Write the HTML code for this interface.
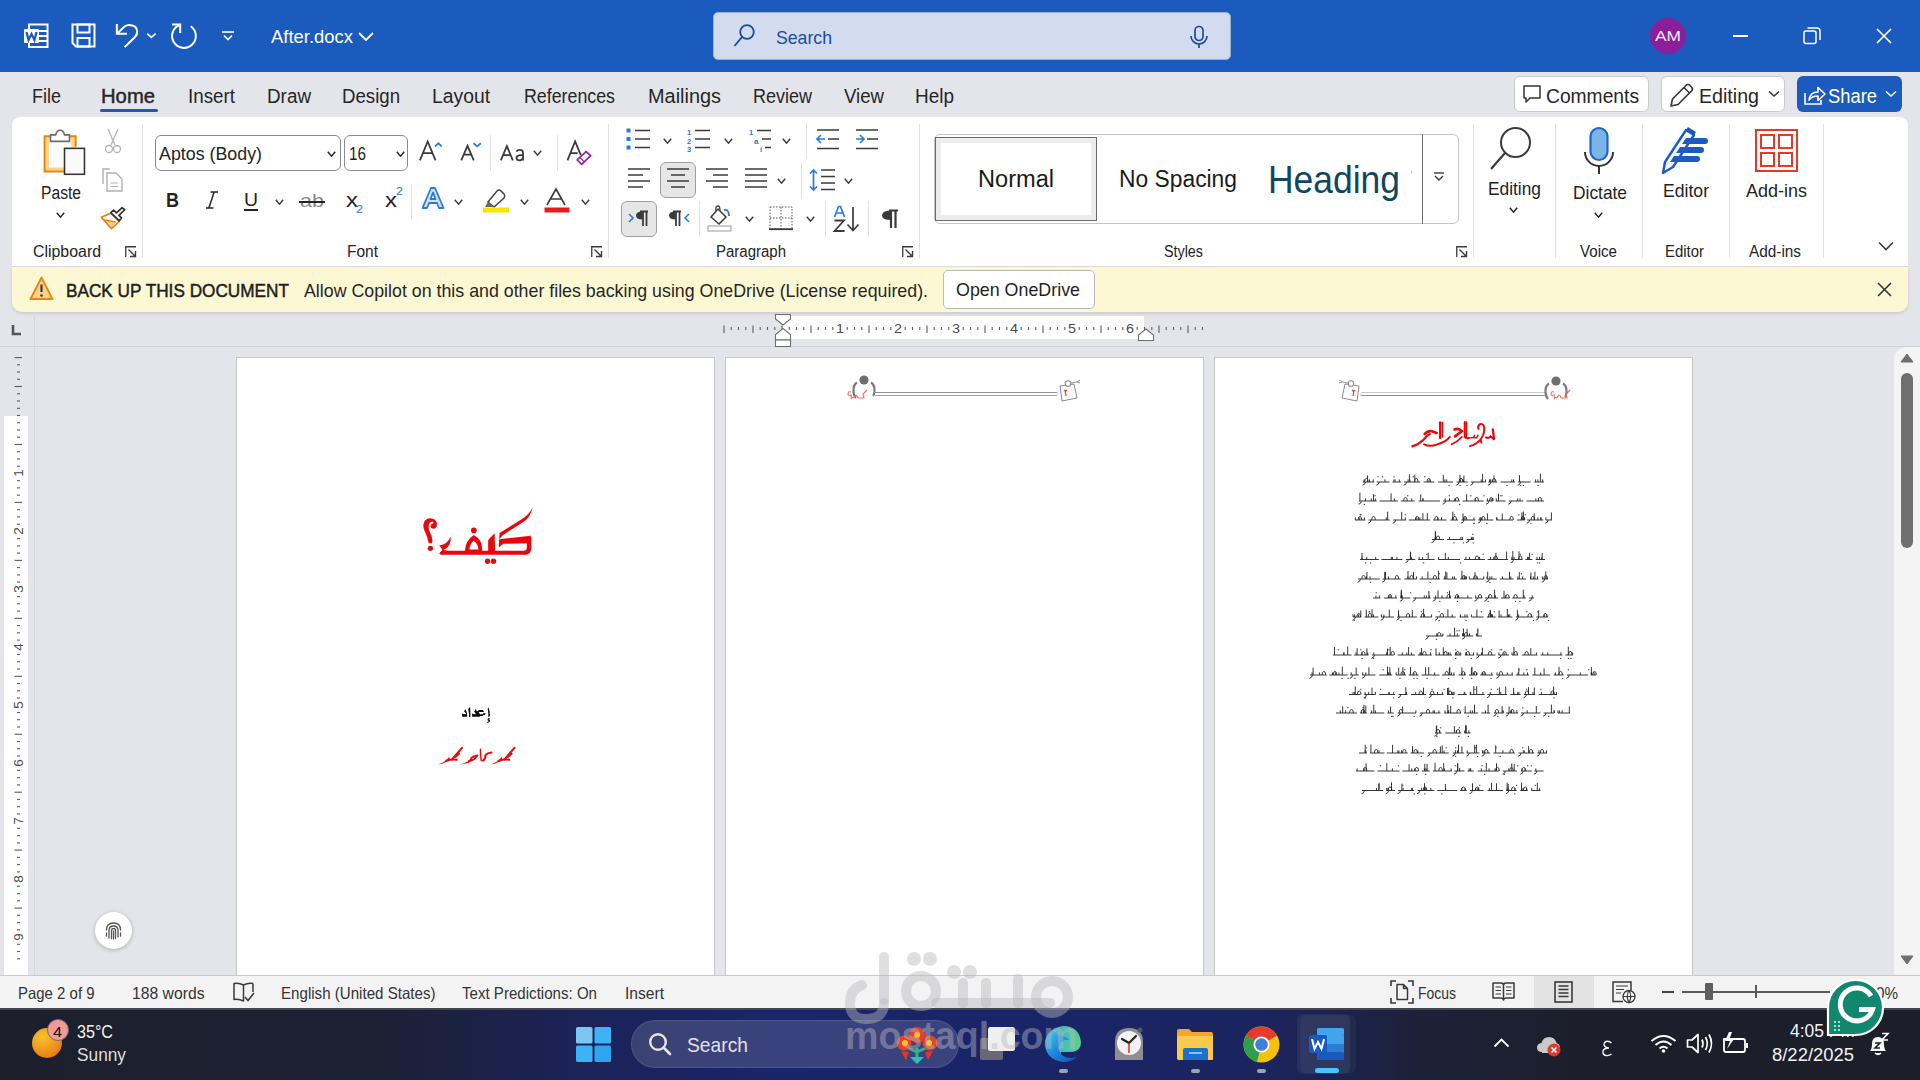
<!DOCTYPE html>
<html><head><meta charset="utf-8"><style>
*{margin:0;padding:0;box-sizing:border-box}
html,body{width:1920px;height:1080px;overflow:hidden}
body{position:relative;background:#e4e5ea;font-family:"Liberation Sans",sans-serif}
.a{position:absolute}
.t{white-space:nowrap;transform-origin:0 0}
svg{overflow:visible}
</style></head><body>
<div class="a" style="left:0px;top:0px;width:1920px;height:72px;background:#1b5bbe"></div>
<div class="a" style="left:12px;top:117px;width:1896px;height:150px;background:#fff;border-radius:8px 8px 0 0;border-bottom:1px solid #dcdcdc"></div>
<div class="a" style="left:12px;top:267px;width:1896px;height:45px;background:#fcf8d4;border-radius:0 0 10px 10px;box-shadow:0 2px 3px rgba(0,0,0,0.10)"></div>
<div class="a" style="left:0px;top:346px;width:1920px;height:1px;background:#d2d3d7"></div>
<div class="a" style="left:34px;top:312px;width:1px;height:663px;background:#d6d7db"></div>
<div class="a" style="left:0px;top:975px;width:1920px;height:1px;background:#c9cacd"></div>
<div class="a" style="left:0px;top:976px;width:1920px;height:32px;background:#f3f3f3"></div>
<div class="a" style="left:0;top:1008px;width:1920px;height:72px;background:linear-gradient(90deg,#1b1f2c 0%,#1c2236 22%,#1d2a60 45%,#1c2a66 55%,#1a2350 72%,#171c2c 100%)"></div>
<div class="a" style="left:0px;top:1008px;width:1920px;height:2px;background:#3a3f4e"></div>
<svg class="a" style="left:24px;top:23px;" width="26" height="26" viewBox="0 0 26 26"><rect x="5" y="1.5" width="18.5" height="22.5" fill="none" stroke="#fff" stroke-width="2"/><line x1="14" y1="8" x2="23" y2="8" stroke="#fff" stroke-width="2"/><line x1="14" y1="13" x2="23" y2="13" stroke="#fff" stroke-width="2"/><line x1="14" y1="18" x2="23" y2="18" stroke="#fff" stroke-width="2"/><rect x="0" y="6" width="15" height="14" fill="#fff" rx="1"/><path d="M2.5 9 L4.5 17 L7.5 11 L10.5 17 L12.5 9" fill="none" stroke="#1b5bbe" stroke-width="2.2"/></svg>
<svg class="a" style="left:71px;top:23px;" width="26" height="26" viewBox="0 0 26 26"><path d="M1.5 1.5 H23.5 V23.5 H5 L1.5 20 Z" fill="none" stroke="#fff" stroke-width="2"/><rect x="6.5" y="1.5" width="12" height="8" fill="none" stroke="#fff" stroke-width="2"/><rect x="6.5" y="15" width="12" height="8.5" fill="none" stroke="#fff" stroke-width="2"/></svg>
<svg class="a" style="left:110px;top:16px;" width="50" height="40" viewBox="0 0 50 40"><path d="M6.85 8 V17.8 H17" fill="none" stroke="#fff" stroke-width="2"/><path d="M7.5 17.3 L14.5 10.5 Q17 8.8 19.6 8.9 Q27 9.3 27.2 15.5 Q27.3 19 24.5 21.5 L14.6 31.1" fill="none" stroke="#fff" stroke-width="2"/><path d="M37.2 17.6 L41.4 21.4 L45.6 17.6" fill="none" stroke="#fff" stroke-width="1.6"/></svg>
<svg class="a" style="left:170px;top:22px;" width="28" height="28" viewBox="0 0 28 28"><path d="M2 2.5 H10.2 V10.9" fill="none" stroke="#fff" stroke-width="2"/><path d="M20.7 4.3 A11.85 11.85 0 1 1 10.2 2.8" fill="none" stroke="#fff" stroke-width="2"/></svg>
<svg class="a" style="left:221px;top:30px;" width="14" height="12" viewBox="0 0 14 12"><line x1="1" y1="2" x2="13" y2="2" stroke="#fff" stroke-width="1.6"/><path d="M3 5.5 L7 9.5 L11 5.5" fill="none" stroke="#fff" stroke-width="1.6"/></svg>
<div class="a t" style="left:271px;top:26.91px;font-size:19px;line-height:19px;color:#ffffff;transform:scaleX(0.9706);">After.docx</div>
<svg class="a" style="left:358px;top:31px;" width="16" height="11" viewBox="0 0 16 11"><path d="M1 2 L8 9 L15 2" fill="none" stroke="#fff" stroke-width="1.8"/></svg>
<div class="a" style="left:713px;top:12px;width:518px;height:48px;background:#d2dcee;border-radius:5px;border:1px solid #9fb0cf"></div>
<svg class="a" style="left:733px;top:24px;" width="22" height="24" viewBox="0 0 22 24"><circle cx="14" cy="8" r="6.8" fill="none" stroke="#1b4c9c" stroke-width="1.8"/><line x1="9" y1="13" x2="1.5" y2="22" stroke="#1b4c9c" stroke-width="1.9"/></svg>
<div class="a t" style="left:776px;top:27.91px;font-size:19px;line-height:19px;color:#1b4c9c;transform:scaleX(0.9303);">Search</div>
<svg class="a" style="left:1189px;top:25px;" width="20" height="24" viewBox="0 0 20 24"><rect x="6" y="1.5" width="8" height="14" rx="4" fill="none" stroke="#1b4c9c" stroke-width="1.7"/><path d="M2 11 A8 8 0 0 0 18 11" fill="none" stroke="#1b4c9c" stroke-width="1.7"/><line x1="10" y1="19" x2="10" y2="23" stroke="#1b4c9c" stroke-width="1.7"/></svg>
<div class="a" style="left:1650px;top:18px;width:36px;height:36px;border-radius:50%;background:#8b1f9b"></div>
<div class="a t" style="left:1655px;top:28.30px;font-size:15px;line-height:15px;color:#f6e9f7;transform:scaleX(1.1556);">AM</div>
<div class="a" style="left:1733px;top:35px;width:15px;height:1.5px;background:#fff"></div>
<svg class="a" style="left:1803px;top:27px;" width="18" height="18" viewBox="0 0 18 18"><rect x="1" y="4" width="12" height="12.5" rx="2" fill="none" stroke="#fff" stroke-width="1.5"/><path d="M4.5 1 H14 Q17 1 17 4 V13" fill="none" stroke="#fff" stroke-width="1.5"/></svg>
<svg class="a" style="left:1876px;top:28px;" width="16" height="16" viewBox="0 0 16 16"><path d="M1 1 L15 15 M15 1 L1 15" stroke="#fff" stroke-width="1.6"/></svg>
<div class="a t" style="left:32px;top:86.07px;font-size:20px;line-height:20px;color:#262626;transform:scaleX(0.8999);">File</div>
<div class="a t" style="left:101px;top:86.07px;font-size:20px;line-height:20px;color:#262626;transform:scaleX(1.0122);-webkit-text-stroke:0.45px #262626">Home</div>
<div class="a t" style="left:188px;top:86.07px;font-size:20px;line-height:20px;color:#262626;transform:scaleX(0.9397);">Insert</div>
<div class="a t" style="left:267px;top:86.07px;font-size:20px;line-height:20px;color:#262626;transform:scaleX(0.9428);">Draw</div>
<div class="a t" style="left:342px;top:86.07px;font-size:20px;line-height:20px;color:#262626;transform:scaleX(0.9317);">Design</div>
<div class="a t" style="left:432px;top:86.07px;font-size:20px;line-height:20px;color:#262626;transform:scaleX(0.9660);">Layout</div>
<div class="a t" style="left:524px;top:86.07px;font-size:20px;line-height:20px;color:#262626;transform:scaleX(0.8898);">References</div>
<div class="a t" style="left:648px;top:86.07px;font-size:20px;line-height:20px;color:#262626;transform:scaleX(0.9951);">Mailings</div>
<div class="a t" style="left:753px;top:86.07px;font-size:20px;line-height:20px;color:#262626;transform:scaleX(0.8997);">Review</div>
<div class="a t" style="left:844px;top:86.07px;font-size:20px;line-height:20px;color:#262626;transform:scaleX(0.9305);">View</div>
<div class="a t" style="left:915px;top:86.07px;font-size:20px;line-height:20px;color:#262626;transform:scaleX(0.9482);">Help</div>
<div class="a" style="left:100px;top:109px;width:58px;height:3px;background:#1b5bbe;border-radius:2px"></div>
<div class="a" style="left:1514px;top:76px;width:135px;height:36px;background:#fff;border:1px solid #c9c9c9;border-radius:6px"></div>
<svg class="a" style="left:1522px;top:84px;" width="22" height="22" viewBox="0 0 22 22"><path d="M2 2 H18 V14 H8 L4 18 V14 H2 Z" fill="none" stroke="#333" stroke-width="1.5" stroke-linejoin="round"/></svg>
<div class="a t" style="left:1546px;top:86.07px;font-size:20px;line-height:20px;color:#262626;transform:scaleX(0.9619);">Comments</div>
<div class="a" style="left:1661px;top:76px;width:124px;height:36px;background:#fff;border:1px solid #c9c9c9;border-radius:6px"></div>
<svg class="a" style="left:1667px;top:82px;" width="28" height="28" viewBox="0 0 28 28"><path d="M4 24 L5.5 17 L19 3.5 Q21 1.5 23 3.5 L24.5 5 Q26.5 7 24.5 9 L11 22.5 Z" fill="none" stroke="#333" stroke-width="1.6" stroke-linejoin="round"/><line x1="17" y1="5.5" x2="22.5" y2="11" stroke="#333" stroke-width="1.5"/></svg>
<div class="a t" style="left:1699px;top:86.07px;font-size:20px;line-height:20px;color:#262626;transform:scaleX(0.9812);">Editing</div>
<svg class="a" style="left:1768px;top:90px;" width="12" height="8" viewBox="0 0 12 8"><path d="M1 1.5 L6 6 L11 1.5" fill="none" stroke="#333" stroke-width="1.5"/></svg>
<div class="a" style="left:1797px;top:76px;width:105px;height:36px;background:#1b5bbe;border-radius:6px"></div>
<svg class="a" style="left:1803px;top:84px;" width="24" height="22" viewBox="0 0 24 22"><path d="M2 9 V20 H18 V16" fill="none" stroke="#fff" stroke-width="1.6"/><path d="M6 16 Q7 8 15 8 V3.5 L22 10 L15 16.5 V12 Q9 12 6 16 Z" fill="none" stroke="#fff" stroke-width="1.6" stroke-linejoin="round"/></svg>
<div class="a t" style="left:1828px;top:86.07px;font-size:20px;line-height:20px;color:#ffffff;transform:scaleX(0.9182);">Share</div>
<svg class="a" style="left:1885px;top:90px;" width="12" height="8" viewBox="0 0 12 8"><path d="M1 1.5 L6 6 L11 1.5" fill="none" stroke="#fff" stroke-width="1.5"/></svg>
<div class="a" style="left:142px;top:124px;width:1px;height:134px;background:#e0e0e0"></div>
<div class="a" style="left:608px;top:124px;width:1px;height:134px;background:#e0e0e0"></div>
<div class="a" style="left:919px;top:124px;width:1px;height:134px;background:#e0e0e0"></div>
<div class="a" style="left:1473px;top:124px;width:1px;height:134px;background:#e0e0e0"></div>
<div class="a" style="left:1555px;top:124px;width:1px;height:134px;background:#e0e0e0"></div>
<div class="a" style="left:1642px;top:124px;width:1px;height:134px;background:#e0e0e0"></div>
<div class="a" style="left:1729px;top:124px;width:1px;height:134px;background:#e0e0e0"></div>
<div class="a" style="left:1823px;top:124px;width:1px;height:134px;background:#e0e0e0"></div>
<div class="a t" style="left:33px;top:243.95px;font-size:16px;line-height:16px;color:#242424;transform:scaleX(0.9930);">Clipboard</div>
<svg class="a" style="left:125px;top:246px;" width="12" height="12" viewBox="0 0 12 12"><path d="M0.75 11 V0.75 H11" fill="none" stroke="#3b3b3b" stroke-width="1.3"/><path d="M3.5 3.5 L10.5 10.5 M5 10.5 H10.5 V5" fill="none" stroke="#3b3b3b" stroke-width="1.4"/></svg>
<div class="a t" style="left:347px;top:243.95px;font-size:16px;line-height:16px;color:#242424;transform:scaleX(0.9684);">Font</div>
<svg class="a" style="left:591px;top:246px;" width="12" height="12" viewBox="0 0 12 12"><path d="M0.75 11 V0.75 H11" fill="none" stroke="#3b3b3b" stroke-width="1.3"/><path d="M3.5 3.5 L10.5 10.5 M5 10.5 H10.5 V5" fill="none" stroke="#3b3b3b" stroke-width="1.4"/></svg>
<div class="a t" style="left:716px;top:243.95px;font-size:16px;line-height:16px;color:#242424;transform:scaleX(0.9369);">Paragraph</div>
<svg class="a" style="left:902px;top:246px;" width="12" height="12" viewBox="0 0 12 12"><path d="M0.75 11 V0.75 H11" fill="none" stroke="#3b3b3b" stroke-width="1.3"/><path d="M3.5 3.5 L10.5 10.5 M5 10.5 H10.5 V5" fill="none" stroke="#3b3b3b" stroke-width="1.4"/></svg>
<div class="a t" style="left:1164px;top:243.95px;font-size:16px;line-height:16px;color:#242424;transform:scaleX(0.8951);">Styles</div>
<svg class="a" style="left:1456px;top:246px;" width="12" height="12" viewBox="0 0 12 12"><path d="M0.75 11 V0.75 H11" fill="none" stroke="#3b3b3b" stroke-width="1.3"/><path d="M3.5 3.5 L10.5 10.5 M5 10.5 H10.5 V5" fill="none" stroke="#3b3b3b" stroke-width="1.4"/></svg>
<div class="a t" style="left:1580px;top:244.45px;font-size:16px;line-height:16px;color:#242424;transform:scaleX(0.9453);">Voice</div>
<div class="a t" style="left:1665px;top:244.45px;font-size:16px;line-height:16px;color:#242424;transform:scaleX(0.9331);">Editor</div>
<div class="a t" style="left:1749px;top:244.45px;font-size:16px;line-height:16px;color:#242424;transform:scaleX(0.9586);">Add-ins</div>
<svg class="a" style="left:1878px;top:241px;" width="16" height="11" viewBox="0 0 16 11"><path d="M1 1.5 L8 8.5 L15 1.5" fill="none" stroke="#3b3b3b" stroke-width="1.6"/></svg>
<svg class="a" style="left:36px;top:124px;" width="56" height="56" viewBox="0 0 56 56"><g transform="scale(0.05185)"><rect x="165" y="235" width="600" height="680" fill="#fbd58a"/><rect x="250" y="320" width="430" height="520" fill="#fbfbfb"/><path d="M280 235 H165 V915 H540 M645 235 H765 V440" fill="none" stroke="#e8850f" stroke-width="38"/><path d="M280 210 H380 Q400 120 465 120 Q530 120 550 210 H645 V335 H280 Z" fill="#fff" stroke="#6b6b6b" stroke-width="30"/><rect x="550" y="470" width="385" height="500" fill="#fafafa" stroke="#333" stroke-width="30"/></g></svg>
<div class="a t" style="left:41px;top:183.76px;font-size:18px;line-height:18px;color:#242424;transform:scaleX(0.8691);">Paste</div>
<svg class="a" style="left:56px;top:212px;" width="9" height="6" viewBox="0 0 9 6"><path d="M0.8 0.8 L4.5 5.2 L8.2 0.8" fill="none" stroke="#242424" stroke-width="1.5"/></svg>
<svg class="a" style="left:104px;top:128px;" width="18" height="26" viewBox="0 0 18 26"><path d="M4 1 L11 17 M14 1 L7 17" stroke="#b5b5b5" stroke-width="1.3" fill="none"/><circle cx="5" cy="21" r="3.5" fill="none" stroke="#b5b5b5" stroke-width="1.3"/><circle cx="13" cy="21" r="3.5" fill="none" stroke="#b5b5b5" stroke-width="1.3"/></svg>
<svg class="a" style="left:100px;top:167px;" width="26" height="26" viewBox="0 0 26 26"><path d="M3 17 V2 H10" fill="none" stroke="#b0b0b0" stroke-width="1.4"/><path d="M7 6 H16 L22 12 V24 H7 Z" fill="none" stroke="#b0b0b0" stroke-width="1.4"/><path d="M10.5 16 H18 M10.5 19.5 H18" stroke="#b0b0b0" stroke-width="1.2"/></svg>
<svg class="a" style="left:96px;top:200px;" width="34" height="34" viewBox="0 0 34 34"><g transform="scale(0.03148)"><path d="M330 640 L640 700 L490 880 Z" fill="#f9d28a"/><path d="M170 550 L460 420 L740 680 L490 910 Z" fill="none" stroke="#e87d10" stroke-width="52" stroke-linejoin="round"/><path d="M250 630 L620 700" stroke="#e87d10" stroke-width="45"/><path d="M470 400 L560 320 L650 410 L830 240 L910 310 L730 490 L810 570 L740 660 Z" fill="#fff" stroke="#333" stroke-width="55" stroke-linejoin="round"/></g></svg>
<div class="a" style="left:155px;top:135px;width:186px;height:36px;background:#fff;border:1px solid #8a8a8a;border-radius:6px"></div>
<div class="a t" style="left:159px;top:143.91px;font-size:19px;line-height:19px;color:#242424;transform:scaleX(0.9379);">Aptos (Body)</div>
<svg class="a" style="left:327px;top:151px;" width="9" height="6" viewBox="0 0 9 6"><path d="M0.8 0.8 L4.5 5.2 L8.2 0.8" fill="none" stroke="#242424" stroke-width="1.5"/></svg>
<div class="a" style="left:344px;top:135px;width:64px;height:36px;background:#fff;border:1px solid #8a8a8a;border-radius:6px"></div>
<div class="a t" style="left:349px;top:143.91px;font-size:19px;line-height:19px;color:#242424;transform:scaleX(0.8045);">16</div>
<svg class="a" style="left:396px;top:151px;" width="9" height="6" viewBox="0 0 9 6"><path d="M0.8 0.8 L4.5 5.2 L8.2 0.8" fill="none" stroke="#242424" stroke-width="1.5"/></svg>
<svg class="a" style="left:410px;top:125px;" width="200" height="110" viewBox="0 0 200 110"><g transform="scale(0.10417)" fill="none" stroke="#3b3b3b" stroke-width="17"><path d="M95 340 L170 158 L245 340 M125 270 H215"/><path d="M492 340 L552 200 L612 340 M515 285 H590"/><path d="M872 340 L930 202 L987 340 M893 290 H966"/><path d="M1085 340 V270 Q1085 238 1055 238 Q1030 238 1022 255 M1085 290 Q1030 285 1022 310 Q1022 340 1050 340 Q1075 340 1085 315"/><path d="M1512 340 L1585 158 L1640 290 M1540 270 H1610"/></g><g transform="scale(0.10417)"><path d="M240 205 L272 175 L304 205" fill="none" stroke="#2a7bd4" stroke-width="17"/><path d="M610 175 L645 205 L680 175" fill="none" stroke="#2a7bd4" stroke-width="17"/><path d="M1605 335 L1690 255 L1735 295 L1648 378 Z" fill="#fff" stroke="#8b2aa4" stroke-width="17" stroke-linejoin="round"/><path d="M1630 312 L1672 352" stroke="#8b2aa4" stroke-width="12"/></g></svg>
<div class="a" style="left:490px;top:135px;width:1px;height:36px;background:#e0e0e0"></div>
<svg class="a" style="left:533px;top:150px;" width="9" height="6" viewBox="0 0 9 6"><path d="M0.8 0.8 L4.5 5.2 L8.2 0.8" fill="none" stroke="#3b3b3b" stroke-width="1.5"/></svg>
<div class="a" style="left:557px;top:135px;width:1px;height:36px;background:#e0e0e0"></div>
<div class="a t" style="left:166px;top:190.07px;font-size:20px;line-height:20px;color:#242424;font-weight:700;transform:scaleX(0.9000);">B</div>
<svg class="a" style="left:204px;top:191px;" width="16" height="18" viewBox="0 0 16 18"><path d="M10 1.5 L5 16.5 M6.5 1 H14 M2 17 H9.5" fill="none" stroke="#242424" stroke-width="1.5"/></svg>
<div class="a t" style="left:244px;top:189.91px;font-size:19px;line-height:19px;color:#242424;transform:scaleX(1.0203);">U</div>
<div class="a" style="left:244px;top:209px;width:14px;height:1.5px;background:#242424"></div>
<svg class="a" style="left:275px;top:199px;" width="9" height="6" viewBox="0 0 9 6"><path d="M0.8 0.8 L4.5 5.2 L8.2 0.8" fill="none" stroke="#3b3b3b" stroke-width="1.5"/></svg>
<div class="a t" style="left:300px;top:190.91px;font-size:19px;line-height:19px;color:#8a8a8a;transform:scaleX(1.1357);">ab</div>
<div class="a" style="left:299px;top:201px;width:26px;height:1.5px;background:#242424"></div>
<div class="a t" style="left:346px;top:190.07px;font-size:20px;line-height:20px;color:#242424;transform:scaleX(1.2000);">x</div>
<div class="a t" style="left:356px;top:203.69px;font-size:11px;line-height:11px;color:#2a7bd4;transform:scaleX(1.1443);">2</div>
<div class="a t" style="left:385px;top:190.07px;font-size:20px;line-height:20px;color:#242424;transform:scaleX(1.2000);">x</div>
<div class="a t" style="left:396px;top:185.69px;font-size:11px;line-height:11px;color:#2a7bd4;transform:scaleX(1.1443);">2</div>
<div class="a" style="left:411px;top:184px;width:1px;height:35px;background:#e0e0e0"></div>
<svg class="a" style="left:421px;top:186px;" width="24" height="24" viewBox="0 0 24 24"><path d="M1.5 22 L10 2 H14 L22.5 22 H18 L16 17 H8 L6 22 Z M9.5 13 H14.5 L12 6.5 Z" fill="#cfe3fa" stroke="#2a7bd4" stroke-width="1.8" stroke-linejoin="round"/></svg>
<svg class="a" style="left:454px;top:199px;" width="9" height="6" viewBox="0 0 9 6"><path d="M0.8 0.8 L4.5 5.2 L8.2 0.8" fill="none" stroke="#3b3b3b" stroke-width="1.5"/></svg>
<svg class="a" style="left:482px;top:188px;" width="28" height="26" viewBox="0 0 28 26"><path d="M6 14 L15 3 Q17 1 19 3 L22 6 Q23.5 8 22 10 L12 19 Z" fill="#fff" stroke="#444" stroke-width="1.5"/><path d="M6 14 L3 19 L8 19 L12 19" fill="#666"/><rect x="1" y="19.5" width="26" height="5" fill="#f7e600"/></svg>
<svg class="a" style="left:520px;top:199px;" width="9" height="6" viewBox="0 0 9 6"><path d="M0.8 0.8 L4.5 5.2 L8.2 0.8" fill="none" stroke="#3b3b3b" stroke-width="1.5"/></svg>
<svg class="a" style="left:544px;top:188px;" width="26" height="26" viewBox="0 0 26 26"><path d="M3 17 L12 1 L21 17 M6.5 11 H17.5" fill="none" stroke="#3b3b3b" stroke-width="1.6"/><rect x="0.5" y="19.5" width="25" height="5" fill="#e81a1a"/></svg>
<svg class="a" style="left:581px;top:199px;" width="9" height="6" viewBox="0 0 9 6"><path d="M0.8 0.8 L4.5 5.2 L8.2 0.8" fill="none" stroke="#3b3b3b" stroke-width="1.5"/></svg>
<svg class="a" style="left:626px;top:128px;" width="26" height="24" viewBox="0 0 26 24"><rect x="0.5" y="0.5" width="4" height="4" fill="#2a7bd4"/><rect x="0.5" y="9" width="4" height="4" fill="#2a7bd4"/><rect x="0.5" y="17.5" width="4" height="4" fill="#2a7bd4"/><path d="M9 2.5 H24 M9 11 H24 M9 19.5 H24" stroke="#3b3b3b" stroke-width="1.7"/></svg>
<svg class="a" style="left:663px;top:138px;" width="9" height="6" viewBox="0 0 9 6"><path d="M0.8 0.8 L4.5 5.2 L8.2 0.8" fill="none" stroke="#3b3b3b" stroke-width="1.5"/></svg>
<svg class="a" style="left:687px;top:128px;" width="26" height="25" viewBox="0 0 26 25"><text x="0" y="6.5" font-size="7.5" font-family="Liberation Sans" font-weight="700" fill="#2a7bd4">1</text><text x="0" y="15.5" font-size="7.5" font-family="Liberation Sans" font-weight="700" fill="#2a7bd4">2</text><text x="0" y="24" font-size="7.5" font-family="Liberation Sans" font-weight="700" fill="#2a7bd4">3</text><path d="M8 2.5 H23 M8 11 H23 M8 19.5 H23" stroke="#3b3b3b" stroke-width="1.7"/></svg>
<svg class="a" style="left:724px;top:138px;" width="9" height="6" viewBox="0 0 9 6"><path d="M0.8 0.8 L4.5 5.2 L8.2 0.8" fill="none" stroke="#3b3b3b" stroke-width="1.5"/></svg>
<svg class="a" style="left:748px;top:128px;" width="26" height="25" viewBox="0 0 26 25"><text x="1" y="6.5" font-size="7.5" font-family="Liberation Sans" font-weight="700" fill="#2a7bd4">1</text><text x="6" y="15.5" font-size="8" font-family="Liberation Sans" font-weight="700" fill="#2a7bd4">a</text><text x="12" y="24" font-size="7.5" font-family="Liberation Sans" font-weight="700" fill="#2a7bd4">i</text><path d="M9 2.5 H23 M14 11 H23 M17 19.5 H23" stroke="#3b3b3b" stroke-width="1.7"/></svg>
<svg class="a" style="left:782px;top:138px;" width="9" height="6" viewBox="0 0 9 6"><path d="M0.8 0.8 L4.5 5.2 L8.2 0.8" fill="none" stroke="#3b3b3b" stroke-width="1.5"/></svg>
<div class="a" style="left:806px;top:123px;width:1px;height:36px;background:#e0e0e0"></div>
<svg class="a" style="left:816px;top:129px;" width="24" height="22" viewBox="0 0 24 22"><path d="M1 1 H23 M12 10 H23 M1 19.5 H23" stroke="#3b3b3b" stroke-width="1.7"/><path d="M1 10 H9 M5 6 L1 10 L5 14" fill="none" stroke="#2a7bd4" stroke-width="1.7"/></svg>
<svg class="a" style="left:855px;top:129px;" width="24" height="22" viewBox="0 0 24 22"><path d="M1 1 H23 M12 10 H23 M1 19.5 H23" stroke="#3b3b3b" stroke-width="1.7"/><path d="M1 10 H9 M5 6 L9 10 L5 14" fill="none" stroke="#2a7bd4" stroke-width="1.7"/></svg>
<svg class="a" style="left:627px;top:168px;" width="24" height="22" viewBox="0 0 24 22"><path d="M1 1 H23 M1 7 H16 M1 13 H23 M1 19 H16" stroke="#3b3b3b" stroke-width="1.7"/></svg>
<div class="a" style="left:660px;top:162px;width:36px;height:36px;background:#e6e6e6;border:1px solid #9e9e9e;border-radius:6px"></div>
<svg class="a" style="left:666px;top:168px;" width="24" height="22" viewBox="0 0 24 22"><path d="M1 1 H23 M5 7 H19 M1 13 H23 M5 19 H19" stroke="#3b3b3b" stroke-width="1.7"/></svg>
<svg class="a" style="left:705px;top:168px;" width="24" height="22" viewBox="0 0 24 22"><path d="M1 1 H23 M8 7 H23 M1 13 H23 M8 19 H23" stroke="#3b3b3b" stroke-width="1.7"/></svg>
<svg class="a" style="left:744px;top:168px;" width="24" height="22" viewBox="0 0 24 22"><path d="M1 1 H23 M1 7 H23 M1 13 H23 M1 19 H23" stroke="#3b3b3b" stroke-width="1.7"/></svg>
<svg class="a" style="left:777px;top:178px;" width="9" height="6" viewBox="0 0 9 6"><path d="M0.8 0.8 L4.5 5.2 L8.2 0.8" fill="none" stroke="#3b3b3b" stroke-width="1.5"/></svg>
<div class="a" style="left:801px;top:163px;width:1px;height:35px;background:#e0e0e0"></div>
<svg class="a" style="left:809px;top:168px;" width="28" height="24" viewBox="0 0 28 24"><path d="M4.5 2 V22 M1 5.5 L4.5 2 L8 5.5 M1 18.5 L4.5 22 L8 18.5" fill="none" stroke="#2a7bd4" stroke-width="1.7"/><path d="M12 2 H26 M12 8.5 H26 M12 15 H26 M12 21.5 H26" stroke="#3b3b3b" stroke-width="1.7"/></svg>
<svg class="a" style="left:844px;top:178px;" width="9" height="6" viewBox="0 0 9 6"><path d="M0.8 0.8 L4.5 5.2 L8.2 0.8" fill="none" stroke="#3b3b3b" stroke-width="1.5"/></svg>
<div class="a" style="left:621px;top:201px;width:36px;height:36px;background:#e6e6e6;border:1px solid #9e9e9e;border-radius:6px"></div>
<svg class="a" style="left:628px;top:210px;" width="22" height="17" viewBox="0 0 22 17"><path d="M1 4 L5 8 L1 12" fill="none" stroke="#2a7bd4" stroke-width="1.6"/><path d="M12 1.5 H20 M15 1.5 V16 M18.5 1.5 V16" stroke="#3b3b3b" stroke-width="1.8"/><path d="M14.5 1.5 Q8 1.5 8 5.5 Q8 9.5 14.5 9.5 Z" fill="#3b3b3b"/></svg>
<svg class="a" style="left:668px;top:210px;" width="22" height="17" viewBox="0 0 22 17"><path d="M21 4 L17 8 L21 12" fill="none" stroke="#2a7bd4" stroke-width="1.6"/><path d="M5 1.5 H13 M8 1.5 V16 M11.5 1.5 V16" stroke="#3b3b3b" stroke-width="1.8"/><path d="M7.5 1.5 Q1 1.5 1 5.5 Q1 9.5 7.5 9.5 Z" fill="#3b3b3b"/></svg>
<div class="a" style="left:699px;top:201px;width:1px;height:36px;background:#e0e0e0"></div>
<svg class="a" style="left:707px;top:205px;" width="28" height="27" viewBox="0 0 28 27"><path d="M4 12 L11 4 L19 12 L12 19 Z" fill="#fff" stroke="#3b3b3b" stroke-width="1.5"/><path d="M9 6 Q8 1 11 1 Q13 1 13 6" fill="none" stroke="#3b3b3b" stroke-width="1.3"/><path d="M17 5 Q22 4 22 11" fill="none" stroke="#2a7bd4" stroke-width="1.8"/><rect x="1" y="21" width="23" height="5" fill="#fff" stroke="#9a9a9a" stroke-width="1"/></svg>
<svg class="a" style="left:745px;top:216px;" width="9" height="6" viewBox="0 0 9 6"><path d="M0.8 0.8 L4.5 5.2 L8.2 0.8" fill="none" stroke="#3b3b3b" stroke-width="1.5"/></svg>
<svg class="a" style="left:769px;top:206px;" width="25" height="25" viewBox="0 0 25 25"><rect x="1" y="1" width="22" height="22" fill="none" stroke="#555" stroke-width="1" stroke-dasharray="1.5 1.5"/><path d="M12 1 V23 M1 12 H23" stroke="#555" stroke-width="1" stroke-dasharray="1.5 1.5"/><line x1="0" y1="23.2" x2="24" y2="23.2" stroke="#3b3b3b" stroke-width="1.8"/></svg>
<svg class="a" style="left:806px;top:216px;" width="9" height="6" viewBox="0 0 9 6"><path d="M0.8 0.8 L4.5 5.2 L8.2 0.8" fill="none" stroke="#3b3b3b" stroke-width="1.5"/></svg>
<div class="a" style="left:825px;top:201px;width:1px;height:36px;background:#e0e0e0"></div>
<svg class="a" style="left:833px;top:205px;" width="28" height="28" viewBox="0 0 28 28"><path d="M1.5 12 L5.5 1.5 H7.5 L11.5 12 M3.3 8 H9.7" fill="none" stroke="#2a7bd4" stroke-width="1.7"/><path d="M1.5 15.5 H11 L1.5 26 H11.5" fill="none" stroke="#3b3b3b" stroke-width="1.8"/><path d="M20 2 V25 M14.5 19.5 L20 25.5 L25.5 19.5" fill="none" stroke="#3b3b3b" stroke-width="1.7"/></svg>
<div class="a" style="left:868px;top:201px;width:1px;height:36px;background:#e0e0e0"></div>
<svg class="a" style="left:880px;top:209px;" width="20" height="20" viewBox="0 0 20 20"><path d="M9 1.5 H18 M11 1.5 V19 M15.5 1.5 V19" stroke="#3b3b3b" stroke-width="2.2"/><path d="M11.5 1.5 Q2 1.5 2 6.5 Q2 11 11.5 11 Z" fill="#3b3b3b"/></svg>
<div class="a" style="left:934px;top:134px;width:525px;height:90px;background:#fff;border:1px solid #c4c4c4;border-radius:6px"></div>
<div class="a" style="left:935px;top:137px;width:162px;height:84px;background:#fff;border:1px solid #6a6a6a;box-shadow:inset 0 0 0 5px #ececec"></div>
<div class="a t" style="left:978px;top:167.53px;font-size:23px;line-height:23px;color:#1a1a1a;transform:scaleX(1.0254);">Normal</div>
<div class="a t" style="left:1119px;top:167.53px;font-size:23px;line-height:23px;color:#1a1a1a;transform:scaleX(0.9924);">No Spacing</div>
<div class="a t" style="left:1268px;top:160.83px;font-size:38px;line-height:38px;color:#0f4761;transform:scaleX(0.9326);">Heading</div>
<div class="a" style="left:1411px;top:171px;width:1px;height:3px;background:#b7c6cf"></div>
<div class="a" style="left:1422px;top:134px;width:37px;height:90px;border-left:1px solid #6a6a6a;border-radius:0 6px 6px 0"></div>
<svg class="a" style="left:1433px;top:172px;" width="12" height="10" viewBox="0 0 12 10"><path d="M1 1 H11" stroke="#3b3b3b" stroke-width="1.4"/><path d="M2 4 L6 8 L10 4" fill="none" stroke="#3b3b3b" stroke-width="1.4"/></svg>
<svg class="a" style="left:1489px;top:126px;" width="48" height="46" viewBox="0 0 48 46"><circle cx="26.5" cy="16.5" r="14.5" fill="#fff" stroke="#3b3b3b" stroke-width="2"/><line x1="16" y1="27" x2="2" y2="43" stroke="#3b3b3b" stroke-width="2.2"/></svg>
<div class="a t" style="left:1488px;top:178.91px;font-size:19px;line-height:19px;color:#242424;transform:scaleX(0.9123);">Editing</div>
<svg class="a" style="left:1509px;top:207px;" width="9" height="6" viewBox="0 0 9 6"><path d="M0.8 0.8 L4.5 5.2 L8.2 0.8" fill="none" stroke="#242424" stroke-width="1.5"/></svg>
<svg class="a" style="left:1583px;top:126px;" width="32" height="50" viewBox="0 0 32 50"><rect x="7.5" y="2" width="17" height="32" rx="8.5" fill="#7bb4ea" stroke="#1e66c4" stroke-width="2.2"/><path d="M2 26 A14 14 0 0 0 30 26" fill="none" stroke="#333" stroke-width="2"/><line x1="16" y1="40" x2="16" y2="48" stroke="#333" stroke-width="2"/></svg>
<div class="a t" style="left:1573px;top:182.91px;font-size:19px;line-height:19px;color:#242424;transform:scaleX(0.9132);">Dictate</div>
<svg class="a" style="left:1594px;top:212px;" width="9" height="6" viewBox="0 0 9 6"><path d="M0.8 0.8 L4.5 5.2 L8.2 0.8" fill="none" stroke="#242424" stroke-width="1.5"/></svg>
<svg class="a" style="left:1661px;top:126px;" width="50" height="50" viewBox="0 0 50 50"><path d="M2 47 L4 36 L25 4 L33 9 L12 41 Z" fill="#f4f4f4" stroke="#1b5bbe" stroke-width="2.4" stroke-linejoin="round"/><path d="M25 4 L33 9 L35 6 L27 1 Z" fill="#1b5bbe"/><path d="M25 12 H44 Q47 12 47 15 Q47 18 44 18 H21 Z" fill="#1b5bbe"/><path d="M19 21 H40 Q43 21 43 24 Q43 27 40 27 H15 Z" fill="#1b5bbe"/><path d="M13 30 H36 Q39 30 39 33 Q39 36 36 36 H9 Z" fill="#1b5bbe"/></svg>
<div class="a t" style="left:1663px;top:180.91px;font-size:19px;line-height:19px;color:#242424;transform:scaleX(0.9268);">Editor</div>
<svg class="a" style="left:1755px;top:129px;" width="43" height="43" viewBox="0 0 43 43"><rect x="1" y="1" width="41" height="41" fill="none" stroke="#e03a2b" stroke-width="2"/><rect x="6" y="6" width="13" height="13" fill="none" stroke="#e03a2b" stroke-width="2"/><rect x="24" y="6" width="13" height="13" fill="none" stroke="#e03a2b" stroke-width="2"/><rect x="6" y="24" width="13" height="13" fill="none" stroke="#e03a2b" stroke-width="2"/><rect x="24" y="24" width="13" height="13" fill="none" stroke="#e03a2b" stroke-width="2"/></svg>
<div class="a t" style="left:1746px;top:180.91px;font-size:19px;line-height:19px;color:#242424;transform:scaleX(0.9469);">Add-ins</div>
<svg class="a" style="left:29px;top:276px;" width="25" height="25" viewBox="0 0 25 25"><path d="M12.5 1.5 L23.5 23 H1.5 Z" fill="#f9d28f" stroke="#e8860f" stroke-width="1.8" stroke-linejoin="round"/><path d="M12.5 8.5 V16" stroke="#3a3a3a" stroke-width="2.2"/><circle cx="12.5" cy="19.5" r="1.3" fill="#3a3a3a"/></svg>
<div class="a t" style="left:66px;top:281.41px;font-size:19px;line-height:19px;color:#1f1f1f;transform:scaleX(0.9053);-webkit-text-stroke:0.5px #1f1f1f">BACK UP THIS DOCUMENT</div>
<div class="a t" style="left:304px;top:281.41px;font-size:19px;line-height:19px;color:#262626;transform:scaleX(0.9364);">Allow Copilot on this and other files backing using OneDrive (License required).</div>
<div class="a" style="left:943px;top:270px;width:152px;height:39px;background:#fff;border:1px solid #b9b9b9;border-radius:5px"></div>
<div class="a t" style="left:956px;top:280.41px;font-size:19px;line-height:19px;color:#1f1f1f;transform:scaleX(0.9394);">Open OneDrive</div>
<svg class="a" style="left:1877px;top:282px;" width="15" height="15" viewBox="0 0 15 15"><path d="M1 1 L14 14 M14 1 L1 14" stroke="#333" stroke-width="1.6"/></svg>
<div class="a" style="left:783px;top:316px;width:361px;height:23px;background:#fff"></div>
<svg class="a" style="left:723px;top:316px;" width="482" height="23" viewBox="0 0 482 23"><line x1="1.0" y1="9.5" x2="1.0" y2="17" stroke="#5c5c5c" stroke-width="1.1"/><line x1="8.2" y1="11" x2="8.2" y2="14" stroke="#5c5c5c" stroke-width="1.1"/><line x1="15.5" y1="11" x2="15.5" y2="14" stroke="#5c5c5c" stroke-width="1.1"/><line x1="22.8" y1="11" x2="22.8" y2="14" stroke="#5c5c5c" stroke-width="1.1"/><line x1="30.0" y1="9.5" x2="30.0" y2="17" stroke="#5c5c5c" stroke-width="1.1"/><line x1="37.2" y1="11" x2="37.2" y2="14" stroke="#5c5c5c" stroke-width="1.1"/><line x1="44.5" y1="11" x2="44.5" y2="14" stroke="#5c5c5c" stroke-width="1.1"/><line x1="51.8" y1="11" x2="51.8" y2="14" stroke="#5c5c5c" stroke-width="1.1"/><line x1="59.0" y1="9.5" x2="59.0" y2="17" stroke="#5c5c5c" stroke-width="1.1"/><line x1="66.2" y1="11" x2="66.2" y2="14" stroke="#5c5c5c" stroke-width="1.1"/><line x1="73.5" y1="11" x2="73.5" y2="14" stroke="#5c5c5c" stroke-width="1.1"/><line x1="80.8" y1="11" x2="80.8" y2="14" stroke="#5c5c5c" stroke-width="1.1"/><line x1="88.0" y1="9.5" x2="88.0" y2="17" stroke="#5c5c5c" stroke-width="1.1"/><line x1="95.2" y1="11" x2="95.2" y2="14" stroke="#5c5c5c" stroke-width="1.1"/><line x1="102.5" y1="11" x2="102.5" y2="14" stroke="#5c5c5c" stroke-width="1.1"/><line x1="109.8" y1="11" x2="109.8" y2="14" stroke="#5c5c5c" stroke-width="1.1"/><line x1="124.2" y1="11" x2="124.2" y2="14" stroke="#5c5c5c" stroke-width="1.1"/><line x1="131.5" y1="11" x2="131.5" y2="14" stroke="#5c5c5c" stroke-width="1.1"/><line x1="138.8" y1="11" x2="138.8" y2="14" stroke="#5c5c5c" stroke-width="1.1"/><line x1="146.0" y1="9.5" x2="146.0" y2="17" stroke="#5c5c5c" stroke-width="1.1"/><line x1="153.2" y1="11" x2="153.2" y2="14" stroke="#5c5c5c" stroke-width="1.1"/><line x1="160.5" y1="11" x2="160.5" y2="14" stroke="#5c5c5c" stroke-width="1.1"/><line x1="167.8" y1="11" x2="167.8" y2="14" stroke="#5c5c5c" stroke-width="1.1"/><line x1="182.2" y1="11" x2="182.2" y2="14" stroke="#5c5c5c" stroke-width="1.1"/><line x1="189.5" y1="11" x2="189.5" y2="14" stroke="#5c5c5c" stroke-width="1.1"/><line x1="196.8" y1="11" x2="196.8" y2="14" stroke="#5c5c5c" stroke-width="1.1"/><line x1="204.0" y1="9.5" x2="204.0" y2="17" stroke="#5c5c5c" stroke-width="1.1"/><line x1="211.2" y1="11" x2="211.2" y2="14" stroke="#5c5c5c" stroke-width="1.1"/><line x1="218.5" y1="11" x2="218.5" y2="14" stroke="#5c5c5c" stroke-width="1.1"/><line x1="225.8" y1="11" x2="225.8" y2="14" stroke="#5c5c5c" stroke-width="1.1"/><line x1="240.2" y1="11" x2="240.2" y2="14" stroke="#5c5c5c" stroke-width="1.1"/><line x1="247.5" y1="11" x2="247.5" y2="14" stroke="#5c5c5c" stroke-width="1.1"/><line x1="254.8" y1="11" x2="254.8" y2="14" stroke="#5c5c5c" stroke-width="1.1"/><line x1="262.0" y1="9.5" x2="262.0" y2="17" stroke="#5c5c5c" stroke-width="1.1"/><line x1="269.2" y1="11" x2="269.2" y2="14" stroke="#5c5c5c" stroke-width="1.1"/><line x1="276.5" y1="11" x2="276.5" y2="14" stroke="#5c5c5c" stroke-width="1.1"/><line x1="283.8" y1="11" x2="283.8" y2="14" stroke="#5c5c5c" stroke-width="1.1"/><line x1="298.2" y1="11" x2="298.2" y2="14" stroke="#5c5c5c" stroke-width="1.1"/><line x1="305.5" y1="11" x2="305.5" y2="14" stroke="#5c5c5c" stroke-width="1.1"/><line x1="312.8" y1="11" x2="312.8" y2="14" stroke="#5c5c5c" stroke-width="1.1"/><line x1="320.0" y1="9.5" x2="320.0" y2="17" stroke="#5c5c5c" stroke-width="1.1"/><line x1="327.2" y1="11" x2="327.2" y2="14" stroke="#5c5c5c" stroke-width="1.1"/><line x1="334.5" y1="11" x2="334.5" y2="14" stroke="#5c5c5c" stroke-width="1.1"/><line x1="341.8" y1="11" x2="341.8" y2="14" stroke="#5c5c5c" stroke-width="1.1"/><line x1="356.2" y1="11" x2="356.2" y2="14" stroke="#5c5c5c" stroke-width="1.1"/><line x1="363.5" y1="11" x2="363.5" y2="14" stroke="#5c5c5c" stroke-width="1.1"/><line x1="370.8" y1="11" x2="370.8" y2="14" stroke="#5c5c5c" stroke-width="1.1"/><line x1="378.0" y1="9.5" x2="378.0" y2="17" stroke="#5c5c5c" stroke-width="1.1"/><line x1="385.2" y1="11" x2="385.2" y2="14" stroke="#5c5c5c" stroke-width="1.1"/><line x1="392.5" y1="11" x2="392.5" y2="14" stroke="#5c5c5c" stroke-width="1.1"/><line x1="399.8" y1="11" x2="399.8" y2="14" stroke="#5c5c5c" stroke-width="1.1"/><line x1="414.2" y1="11" x2="414.2" y2="14" stroke="#5c5c5c" stroke-width="1.1"/><line x1="421.5" y1="11" x2="421.5" y2="14" stroke="#5c5c5c" stroke-width="1.1"/><line x1="428.8" y1="11" x2="428.8" y2="14" stroke="#5c5c5c" stroke-width="1.1"/><line x1="436.0" y1="9.5" x2="436.0" y2="17" stroke="#5c5c5c" stroke-width="1.1"/><line x1="443.2" y1="11" x2="443.2" y2="14" stroke="#5c5c5c" stroke-width="1.1"/><line x1="450.5" y1="11" x2="450.5" y2="14" stroke="#5c5c5c" stroke-width="1.1"/><line x1="457.8" y1="11" x2="457.8" y2="14" stroke="#5c5c5c" stroke-width="1.1"/><line x1="465.0" y1="9.5" x2="465.0" y2="17" stroke="#5c5c5c" stroke-width="1.1"/><line x1="472.2" y1="11" x2="472.2" y2="14" stroke="#5c5c5c" stroke-width="1.1"/><line x1="479.5" y1="11" x2="479.5" y2="14" stroke="#5c5c5c" stroke-width="1.1"/></svg>
<div class="a t" style="left:836.0px;top:321.57px;font-size:13.5px;line-height:13.5px;color:#4a4a4a;transform:scaleX(1.0656);">1</div>
<div class="a t" style="left:894.0px;top:321.57px;font-size:13.5px;line-height:13.5px;color:#4a4a4a;transform:scaleX(1.0656);">2</div>
<div class="a t" style="left:952.0px;top:321.57px;font-size:13.5px;line-height:13.5px;color:#4a4a4a;transform:scaleX(1.0656);">3</div>
<div class="a t" style="left:1010.0px;top:321.57px;font-size:13.5px;line-height:13.5px;color:#4a4a4a;transform:scaleX(1.0656);">4</div>
<div class="a t" style="left:1068.0px;top:321.57px;font-size:13.5px;line-height:13.5px;color:#4a4a4a;transform:scaleX(1.0656);">5</div>
<div class="a t" style="left:1126.0px;top:321.57px;font-size:13.5px;line-height:13.5px;color:#4a4a4a;transform:scaleX(1.0656);">6</div>
<svg class="a" style="left:774px;top:313px;" width="18" height="35" viewBox="0 0 18 35"><path d="M1.5 1.5 H16.5 V6 L9 12 L1.5 6 Z" fill="#fff" stroke="#6e6e6e" stroke-width="1.1"/><path d="M1.5 27 V21.5 L9 15.5 L16.5 21.5 V27 Z" fill="#fff" stroke="#6e6e6e" stroke-width="1.1"/><rect x="1.5" y="27" width="15" height="6.5" fill="#fff" stroke="#6e6e6e" stroke-width="1.1"/></svg>
<svg class="a" style="left:1137px;top:328px;" width="18" height="14" viewBox="0 0 18 14"><path d="M1.5 12.5 V7 L9 1 L16.5 7 V12.5 Z" fill="#fff" stroke="#6e6e6e" stroke-width="1.1"/></svg>
<svg class="a" style="left:11px;top:325px;" width="11" height="11" viewBox="0 0 11 11"><path d="M2 0 V9 H10" fill="none" stroke="#555" stroke-width="2.6"/></svg>
<div class="a" style="left:4px;top:416px;width:24px;height:559px;background:#fff"></div>
<svg class="a" style="left:0px;top:347px;" width="34" height="628" viewBox="0 0 34 628"><line x1="14.5" y1="10.6" x2="22" y2="10.6" stroke="#5c5c5c" stroke-width="1.1"/><line x1="17" y1="17.8" x2="20" y2="17.8" stroke="#5c5c5c" stroke-width="1.1"/><line x1="17" y1="25.0" x2="20" y2="25.0" stroke="#5c5c5c" stroke-width="1.1"/><line x1="17" y1="32.3" x2="20" y2="32.3" stroke="#5c5c5c" stroke-width="1.1"/><line x1="14.5" y1="39.5" x2="22" y2="39.5" stroke="#5c5c5c" stroke-width="1.1"/><line x1="17" y1="46.8" x2="20" y2="46.8" stroke="#5c5c5c" stroke-width="1.1"/><line x1="17" y1="54.0" x2="20" y2="54.0" stroke="#5c5c5c" stroke-width="1.1"/><line x1="17" y1="61.3" x2="20" y2="61.3" stroke="#5c5c5c" stroke-width="1.1"/><line x1="17" y1="68.5" x2="20" y2="68.5" stroke="#5c5c5c" stroke-width="1.1"/><line x1="17" y1="75.7" x2="20" y2="75.7" stroke="#5c5c5c" stroke-width="1.1"/><line x1="17" y1="83.0" x2="20" y2="83.0" stroke="#5c5c5c" stroke-width="1.1"/><line x1="17" y1="90.2" x2="20" y2="90.2" stroke="#5c5c5c" stroke-width="1.1"/><line x1="14.5" y1="97.5" x2="22" y2="97.5" stroke="#5c5c5c" stroke-width="1.1"/><line x1="17" y1="104.7" x2="20" y2="104.7" stroke="#5c5c5c" stroke-width="1.1"/><line x1="17" y1="112.0" x2="20" y2="112.0" stroke="#5c5c5c" stroke-width="1.1"/><line x1="17" y1="119.2" x2="20" y2="119.2" stroke="#5c5c5c" stroke-width="1.1"/><line x1="17" y1="133.7" x2="20" y2="133.7" stroke="#5c5c5c" stroke-width="1.1"/><line x1="17" y1="140.9" x2="20" y2="140.9" stroke="#5c5c5c" stroke-width="1.1"/><line x1="17" y1="148.2" x2="20" y2="148.2" stroke="#5c5c5c" stroke-width="1.1"/><line x1="14.5" y1="155.4" x2="22" y2="155.4" stroke="#5c5c5c" stroke-width="1.1"/><line x1="17" y1="162.7" x2="20" y2="162.7" stroke="#5c5c5c" stroke-width="1.1"/><line x1="17" y1="169.9" x2="20" y2="169.9" stroke="#5c5c5c" stroke-width="1.1"/><line x1="17" y1="177.2" x2="20" y2="177.2" stroke="#5c5c5c" stroke-width="1.1"/><line x1="17" y1="191.6" x2="20" y2="191.6" stroke="#5c5c5c" stroke-width="1.1"/><line x1="17" y1="198.9" x2="20" y2="198.9" stroke="#5c5c5c" stroke-width="1.1"/><line x1="17" y1="206.1" x2="20" y2="206.1" stroke="#5c5c5c" stroke-width="1.1"/><line x1="14.5" y1="213.4" x2="22" y2="213.4" stroke="#5c5c5c" stroke-width="1.1"/><line x1="17" y1="220.6" x2="20" y2="220.6" stroke="#5c5c5c" stroke-width="1.1"/><line x1="17" y1="227.9" x2="20" y2="227.9" stroke="#5c5c5c" stroke-width="1.1"/><line x1="17" y1="235.1" x2="20" y2="235.1" stroke="#5c5c5c" stroke-width="1.1"/><line x1="17" y1="249.6" x2="20" y2="249.6" stroke="#5c5c5c" stroke-width="1.1"/><line x1="17" y1="256.8" x2="20" y2="256.8" stroke="#5c5c5c" stroke-width="1.1"/><line x1="17" y1="264.1" x2="20" y2="264.1" stroke="#5c5c5c" stroke-width="1.1"/><line x1="14.5" y1="271.3" x2="22" y2="271.3" stroke="#5c5c5c" stroke-width="1.1"/><line x1="17" y1="278.6" x2="20" y2="278.6" stroke="#5c5c5c" stroke-width="1.1"/><line x1="17" y1="285.8" x2="20" y2="285.8" stroke="#5c5c5c" stroke-width="1.1"/><line x1="17" y1="293.1" x2="20" y2="293.1" stroke="#5c5c5c" stroke-width="1.1"/><line x1="17" y1="307.5" x2="20" y2="307.5" stroke="#5c5c5c" stroke-width="1.1"/><line x1="17" y1="314.8" x2="20" y2="314.8" stroke="#5c5c5c" stroke-width="1.1"/><line x1="17" y1="322.0" x2="20" y2="322.0" stroke="#5c5c5c" stroke-width="1.1"/><line x1="14.5" y1="329.3" x2="22" y2="329.3" stroke="#5c5c5c" stroke-width="1.1"/><line x1="17" y1="336.5" x2="20" y2="336.5" stroke="#5c5c5c" stroke-width="1.1"/><line x1="17" y1="343.8" x2="20" y2="343.8" stroke="#5c5c5c" stroke-width="1.1"/><line x1="17" y1="351.0" x2="20" y2="351.0" stroke="#5c5c5c" stroke-width="1.1"/><line x1="17" y1="365.5" x2="20" y2="365.5" stroke="#5c5c5c" stroke-width="1.1"/><line x1="17" y1="372.7" x2="20" y2="372.7" stroke="#5c5c5c" stroke-width="1.1"/><line x1="17" y1="380.0" x2="20" y2="380.0" stroke="#5c5c5c" stroke-width="1.1"/><line x1="14.5" y1="387.2" x2="22" y2="387.2" stroke="#5c5c5c" stroke-width="1.1"/><line x1="17" y1="394.5" x2="20" y2="394.5" stroke="#5c5c5c" stroke-width="1.1"/><line x1="17" y1="401.7" x2="20" y2="401.7" stroke="#5c5c5c" stroke-width="1.1"/><line x1="17" y1="409.0" x2="20" y2="409.0" stroke="#5c5c5c" stroke-width="1.1"/><line x1="17" y1="423.4" x2="20" y2="423.4" stroke="#5c5c5c" stroke-width="1.1"/><line x1="17" y1="430.7" x2="20" y2="430.7" stroke="#5c5c5c" stroke-width="1.1"/><line x1="17" y1="437.9" x2="20" y2="437.9" stroke="#5c5c5c" stroke-width="1.1"/><line x1="14.5" y1="445.2" x2="22" y2="445.2" stroke="#5c5c5c" stroke-width="1.1"/><line x1="17" y1="452.4" x2="20" y2="452.4" stroke="#5c5c5c" stroke-width="1.1"/><line x1="17" y1="459.7" x2="20" y2="459.7" stroke="#5c5c5c" stroke-width="1.1"/><line x1="17" y1="466.9" x2="20" y2="466.9" stroke="#5c5c5c" stroke-width="1.1"/><line x1="17" y1="481.4" x2="20" y2="481.4" stroke="#5c5c5c" stroke-width="1.1"/><line x1="17" y1="488.6" x2="20" y2="488.6" stroke="#5c5c5c" stroke-width="1.1"/><line x1="17" y1="495.9" x2="20" y2="495.9" stroke="#5c5c5c" stroke-width="1.1"/><line x1="14.5" y1="503.1" x2="22" y2="503.1" stroke="#5c5c5c" stroke-width="1.1"/><line x1="17" y1="510.4" x2="20" y2="510.4" stroke="#5c5c5c" stroke-width="1.1"/><line x1="17" y1="517.6" x2="20" y2="517.6" stroke="#5c5c5c" stroke-width="1.1"/><line x1="17" y1="524.9" x2="20" y2="524.9" stroke="#5c5c5c" stroke-width="1.1"/><line x1="17" y1="539.3" x2="20" y2="539.3" stroke="#5c5c5c" stroke-width="1.1"/><line x1="17" y1="546.6" x2="20" y2="546.6" stroke="#5c5c5c" stroke-width="1.1"/><line x1="17" y1="553.8" x2="20" y2="553.8" stroke="#5c5c5c" stroke-width="1.1"/><line x1="14.5" y1="561.1" x2="22" y2="561.1" stroke="#5c5c5c" stroke-width="1.1"/><line x1="17" y1="568.3" x2="20" y2="568.3" stroke="#5c5c5c" stroke-width="1.1"/><line x1="17" y1="575.6" x2="20" y2="575.6" stroke="#5c5c5c" stroke-width="1.1"/><line x1="17" y1="582.8" x2="20" y2="582.8" stroke="#5c5c5c" stroke-width="1.1"/><line x1="17" y1="597.3" x2="20" y2="597.3" stroke="#5c5c5c" stroke-width="1.1"/><line x1="17" y1="604.5" x2="20" y2="604.5" stroke="#5c5c5c" stroke-width="1.1"/><line x1="17" y1="611.8" x2="20" y2="611.8" stroke="#5c5c5c" stroke-width="1.1"/></svg>
<div class="a t" style="left:8.5px;top:466.45px;width:20px;height:14px;font-size:13.5px;line-height:14px;text-align:center;color:#4a4a4a;transform:rotate(-90deg);transform-origin:50% 50%">1</div>
<div class="a t" style="left:8.5px;top:524.4px;width:20px;height:14px;font-size:13.5px;line-height:14px;text-align:center;color:#4a4a4a;transform:rotate(-90deg);transform-origin:50% 50%">2</div>
<div class="a t" style="left:8.5px;top:582.35px;width:20px;height:14px;font-size:13.5px;line-height:14px;text-align:center;color:#4a4a4a;transform:rotate(-90deg);transform-origin:50% 50%">3</div>
<div class="a t" style="left:8.5px;top:640.3px;width:20px;height:14px;font-size:13.5px;line-height:14px;text-align:center;color:#4a4a4a;transform:rotate(-90deg);transform-origin:50% 50%">4</div>
<div class="a t" style="left:8.5px;top:698.25px;width:20px;height:14px;font-size:13.5px;line-height:14px;text-align:center;color:#4a4a4a;transform:rotate(-90deg);transform-origin:50% 50%">5</div>
<div class="a t" style="left:8.5px;top:756.2px;width:20px;height:14px;font-size:13.5px;line-height:14px;text-align:center;color:#4a4a4a;transform:rotate(-90deg);transform-origin:50% 50%">6</div>
<div class="a t" style="left:8.5px;top:814.1500000000001px;width:20px;height:14px;font-size:13.5px;line-height:14px;text-align:center;color:#4a4a4a;transform:rotate(-90deg);transform-origin:50% 50%">7</div>
<div class="a t" style="left:8.5px;top:872.1px;width:20px;height:14px;font-size:13.5px;line-height:14px;text-align:center;color:#4a4a4a;transform:rotate(-90deg);transform-origin:50% 50%">8</div>
<div class="a t" style="left:8.5px;top:930.0500000000001px;width:20px;height:14px;font-size:13.5px;line-height:14px;text-align:center;color:#4a4a4a;transform:rotate(-90deg);transform-origin:50% 50%">9</div>
<div class="a" style="left:236px;top:357px;width:479px;height:618px;background:#fff;border:1px solid #c6c6c6;border-bottom:none"></div>
<div class="a" style="left:725px;top:357px;width:479px;height:618px;background:#fff;border:1px solid #c6c6c6;border-bottom:none"></div>
<div class="a" style="left:1214px;top:357px;width:479px;height:618px;background:#fff;border:1px solid #c6c6c6;border-bottom:none"></div>
<div class="a" style="left:1894px;top:347px;width:26px;height:628px;background:#f4f4f4;border-radius:13px 0 0 0"></div>
<svg class="a" style="left:1900px;top:353px;" width="14" height="10" viewBox="0 0 14 10"><path d="M7 1 L13 9 H1 Z" fill="#6f6f6f" stroke="#6f6f6f" stroke-width="1" stroke-linejoin="round"/></svg>
<div class="a" style="left:1901px;top:373px;width:12px;height:175px;background:#6f6f6f;border-radius:6px"></div>
<svg class="a" style="left:1900px;top:955px;" width="14" height="10" viewBox="0 0 14 10"><path d="M7 9 L13 1 H1 Z" fill="#6f6f6f" stroke="#6f6f6f" stroke-width="1" stroke-linejoin="round"/></svg>
<div class="a" style="left:95px;top:912px;width:37px;height:37px;border-radius:50%;background:#fff;box-shadow:0 1px 4px rgba(0,0,0,0.25)"></div>
<svg class="a" style="left:104px;top:921px;" width="19" height="19" viewBox="0 0 19 19"><g fill="none" stroke="#555" stroke-width="1.3" stroke-linecap="round"><path d="M2.5 9 Q2.5 2 9.5 2 Q16.5 2 16.5 9"/><path d="M5 17 V9.5 Q5 5 9.5 5 Q14 5 14 9.5 V16"/><path d="M7.5 17.5 V9.5 Q7.5 7.5 9.5 7.5 Q11.5 7.5 11.5 9.5 V17.5"/><path d="M9.5 10 V18"/><path d="M2.5 12 V15"/><path d="M16.5 12 V15"/></g></svg>
<svg class="a" style="left:400px;top:490px;" width="160" height="80" viewBox="0 0 160 80"><g fill="#e8070b" transform="scale(0.08333)"><path d="M1590 205 Q1575 320 1480 385 L1235 540 L1190 590 L1195 515 L1460 350 Q1560 290 1590 205 Z"/><path d="M1190 590 L1570 548 L1562 640 L1240 645 L1185 690 Z"/><path d="M1575 560 L1575 705 Q1570 775 1505 778 L490 778 L470 760 L500 730 L1490 730 Q1520 728 1522 700 L1522 590 Z"/><path d="M470 665 Q575 650 610 555 Q615 690 520 720 L600 735 L490 775 Q530 720 470 665 Z"/><path d="M1058 600 L1135 520 L1142 735 L1058 735 Z"/><path fill-rule="evenodd" d="M885 540 Q990 600 985 700 L985 735 L780 735 Q780 610 885 540 Z M885 610 Q830 660 835 715 L940 715 Q945 660 885 610 Z"/><circle cx="886" cy="485" r="34"/><circle cx="1050" cy="855" r="32"/><circle cx="1122" cy="855" r="32"/><path d="M345 640 Q330 560 300 500 Q260 420 300 365 Q345 320 410 350 Q455 380 440 440 Q420 475 380 460 Q355 440 375 415 Q405 400 400 385 Q360 370 345 420 Q335 470 375 540 Q395 600 385 640 Z"/><circle cx="365" cy="700" r="32"/></g></svg>
<svg class="a" style="left:455px;top:700px;" width="40" height="28" viewBox="0 0 40 28"><g fill="#0a0a0a" transform="scale(0.025926)"><path d="M1290 275 Q1345 400 1350 600 Q1330 650 1280 645 Q1300 500 1262 360 Z"/><path d="M1280 700 Q1350 690 1350 720 L1300 730 Q1360 760 1350 830 L1300 870 L1235 880 L1240 850 L1300 830 Q1300 790 1245 770 Z"/><path d="M660 510 L690 540 L800 545 Q790 470 740 450 L790 350 L850 440 Q900 390 940 385 L1075 385 L1120 440 L1090 460 L930 460 Q900 480 940 510 L970 545 L1075 545 L1100 505 L1180 510 L1150 580 L1085 590 L1060 615 L980 615 L950 650 L660 650 Z"/><path d="M555 275 L585 300 Q600 480 590 655 L545 655 Q545 480 510 360 Z"/><path d="M275 500 L300 540 L430 545 Q430 480 350 450 L400 350 L460 480 L470 650 L275 650 Z"/></g></svg>
<svg class="a" style="left:434px;top:742px;" width="84" height="28" viewBox="0 0 84 28"><g fill="none" stroke="#e40d10" stroke-linecap="round" transform="scale(0.04375)"><g transform="translate(0 0)"><path d="M1840 135 L1610 400" stroke-width="48"/><path d="M1770 265 L1690 335" stroke-width="50"/><path d="M1720 405 Q1600 385 1480 430" stroke-width="48"/><path d="M1545 345 Q1450 470 1280 515 Q1430 505 1570 405 Z" fill="#e40d10" stroke="none"/></g><path d="M1062 165 Q1058 300 1080 425" stroke-width="34"/><path d="M1315 240 Q1220 250 1175 300 Q1185 380 1120 425" stroke-width="45"/><path d="M990 310 Q900 330 850 365" stroke-width="45"/><path d="M975 330 Q930 420 800 430" stroke-width="40"/><path d="M860 345 Q790 470 580 515 Q760 505 890 420 Z" fill="#e40d10" stroke="none"/><g transform="translate(-1200 0)"><path d="M1840 135 L1610 400" stroke-width="48"/><path d="M1770 265 L1690 335" stroke-width="50"/><path d="M1720 405 Q1600 385 1480 430" stroke-width="48"/><path d="M1545 345 Q1450 470 1280 515 Q1430 505 1570 405 Z" fill="#e40d10" stroke="none"/></g></g></svg>
<svg class="a" style="left:852px;top:374px;" width="24" height="26" viewBox="0 0 24 26"><circle cx="12" cy="6" r="4.6" fill="#6e6e6e"/><path d="M5 8.5 Q1 11 1.5 18 Q2 22 4 24" fill="none" stroke="#7a7a7a" stroke-width="2.2"/><path d="M19 8.5 Q23 11 22.5 18 Q22 21 21 22" fill="none" stroke="#7a7a7a" stroke-width="2.2"/></svg>
<svg class="a" style="left:847px;top:389px;" width="21" height="11" viewBox="0 0 21 11"><g fill="none" stroke="#ef6f5f" stroke-width="1.1"><path d="M20 1 L16 5 L17 9 L11 9 Q10 5 8 7 Q7 10 5 8"/><path d="M4 3 Q1 2 1 5 Q1 7 4 6 Q5 9 4 10"/></g></svg>
<div class="a" style="left:873px;top:392px;width:185px;height:4px;border-top:1.3px solid #8f8f8f;border-bottom:1.6px solid #a5a5a5;border-radius:2px"></div>
<svg class="a" style="left:1055px;top:379px;" width="27" height="23" viewBox="0 0 27 23"><path d="M5 7 L19 5 L22 19 L7 22 Z" fill="#fff" stroke="#8a8a8a" stroke-width="1"/><circle cx="13" cy="4.5" r="2.8" fill="#fff" stroke="#8a8a8a" stroke-width="1.1"/><path d="M16 4 L22 3 M22 3 L25 1 M22 3 L25 4" stroke="#8a8a8a" stroke-width="0.9" fill="none"/><path d="M10 11 L11 17 M9 11 Q10 13 12 11" stroke="#f03b2f" stroke-width="1.2" fill="none"/></svg>
<svg class="a" style="left:1337px;top:379px;transform:scaleX(-1);" width="27" height="23" viewBox="0 0 27 23"><path d="M5 7 L19 5 L22 19 L7 22 Z" fill="#fff" stroke="#8a8a8a" stroke-width="1"/><circle cx="13" cy="4.5" r="2.8" fill="#fff" stroke="#8a8a8a" stroke-width="1.1"/><path d="M16 4 L22 3 M22 3 L25 1 M22 3 L25 4" stroke="#8a8a8a" stroke-width="0.9" fill="none"/><path d="M10 11 L11 17 M9 11 Q10 13 12 11" stroke="#f03b2f" stroke-width="1.2" fill="none"/></svg>
<div class="a" style="left:1360px;top:392px;width:186px;height:4px;border-top:1.3px solid #c9c9c9;border-bottom:1.6px solid #8f8f8f;border-radius:2px"></div>
<svg class="a" style="left:1544px;top:375px;" width="24" height="26" viewBox="0 0 24 26"><circle cx="12" cy="6" r="4.6" fill="#6e6e6e"/><path d="M5 8.5 Q1 11 1.5 18 Q2 22 4 24" fill="none" stroke="#7a7a7a" stroke-width="2.2"/><path d="M19 8.5 Q23 11 22.5 18 Q22 21 21 22" fill="none" stroke="#7a7a7a" stroke-width="2.2"/></svg>
<svg class="a" style="left:1550px;top:389px;" width="21" height="11" viewBox="0 0 21 11"><g fill="none" stroke="#ef6f5f" stroke-width="1.1"><path d="M20 1 L16 5 L17 9 L11 9 Q10 5 8 7 Q7 10 5 8"/><path d="M4 3 Q1 2 1 5 Q1 7 4 6 Q5 9 4 10"/></g></svg>
<svg class="a" style="left:1400px;top:410px;" width="110" height="50" viewBox="0 0 110 50"><g fill="none" stroke="#e8090c" stroke-linecap="round" transform="scale(0.0573)"><path d="M215 635 Q330 600 420 510 Q470 440 520 420" stroke-width="38"/><path d="M430 420 Q480 360 560 370 L640 400" stroke-width="45"/><path d="M420 600 Q520 650 650 600 Q800 560 870 470" stroke-width="35"/><path d="M700 215 L700 490" stroke-width="40"/><path d="M740 215 L740 470" stroke-width="28"/><path d="M900 600 Q1000 560 1080 470" stroke-width="30"/><path d="M950 340 Q1020 310 1080 370 L960 460" stroke-width="45"/><path d="M1130 210 L1130 470 Q1160 500 1210 490" stroke-width="35"/><path d="M1160 210 L1160 460" stroke-width="30"/><path d="M1220 630 Q1330 600 1400 520 Q1480 430 1470 300 Q1450 230 1390 250 Q1350 280 1370 330" stroke-width="35"/><path d="M1240 480 Q1290 500 1300 440 M1300 480 Q1350 500 1360 440" stroke-width="28"/><path d="M1410 520 L1420 570 M1500 480 Q1560 500 1580 460 L1640 510" stroke-width="35"/><path d="M1620 340 L1640 500" stroke-width="40"/></g></svg>
<svg class="a" style="left:0px;top:0px;pointer-events:none" width="1920" height="1080" viewBox="0 0 1920 1080"><path d="M1363.0 482.0 H1374.2 M1367.5 482.0 V475.4 M1364.1 482.0 v-2.6 M1369.5 482.0 v-2.6 M1373.2 482.0 v-2.6 M1364.6 482.0 q0 -3.6 1.8 -3.6 q1.8 0 1.8 3.6 M1365.5 482.0 q-0.5 3 -3 3.2 M1376.8 482.0 H1389.6 M1384.9 482.0 v-2.6 M1379.3 482.0 q-0.5 3 -3 3.2 M1381.9 476.8 h1.3 M1377.4 476.8 h1.3 M1392.5 482.0 H1400.9 M1395.1 482.0 v-2.6 M1399.3 482.0 v-2.6 M1394.0 482.0 v-2.6 M1393.4 476.8 h1.3 M1404.2 482.0 H1420.1 M1414.8 482.0 V474.6 M1409.4 482.0 V474.3 M1409.9 482.0 v-2.6 M1408.1 482.0 v-2.6 M1414.5 482.0 q0 -3.6 1.8 -3.6 q1.8 0 1.8 3.6 M1406.7 482.0 q-0.5 3 -3 3.2 M1412.6 476.8 h1.3 M1423.7 482.0 H1434.3 M1429.1 482.0 v-2.6 M1427.0 482.0 q0 -3.6 1.8 -3.6 q1.8 0 1.8 3.6 M1424.1 476.8 h1.3 M1438.0 482.0 H1453.1 M1443.3 482.0 V474.8 M1446.7 482.0 v-2.6 M1444.9 482.0 v-2.6 M1448.5 485.4 h1.3 M1456.7 482.0 H1467.7 M1460.0 482.0 V474.7 M1463.9 482.0 V475.5 M1460.6 482.0 v-2.6 M1463.4 482.0 v-2.6 M1459.2 482.0 q0 -3.6 1.8 -3.6 q1.8 0 1.8 3.6 M1459.2 482.0 q-0.5 3 -3 3.2 M1459.4 485.4 h1.3 M1466.3 485.4 h1.3 M1470.8 482.0 H1485.6 M1482.6 482.0 V473.8 M1481.3 482.0 v-2.6 M1485.4 482.0 v-2.6 M1473.3 482.0 q-0.5 3 -3 3.2 M1488.4 482.0 H1497.2 M1494.0 482.0 V475.5 M1490.0 482.0 v-2.6 M1490.8 482.0 v-2.6 M1489.6 482.0 v-2.6 M1492.3 482.0 q0 -3.6 1.8 -3.6 q1.8 0 1.8 3.6 M1490.9 482.0 q-0.5 3 -3 3.2 M1500.7 482.0 H1515.0 M1513.5 482.0 v-2.6 M1511.8 482.0 v-2.6 M1506.4 485.4 h1.3 M1518.2 482.0 H1530.6 M1519.5 482.0 V475.1 M1519.6 482.0 v-2.6 M1520.7 482.0 q-0.5 3 -3 3.2 M1520.1 485.4 h1.3 M1522.7 485.4 h1.3 M1534.4 482.0 H1544.0 M1540.4 482.0 V473.6 M1537.9 482.0 v-2.6 M1535.6 482.0 v-2.6 M1542.6 482.0 v-2.6 M1537.4 485.4 h1.3 M1359.0 501.0 H1376.8 M1373.5 501.0 V494.2 M1359.9 501.0 V492.6 M1365.5 501.0 v-2.6 M1371.3 501.0 v-2.6 M1375.3 501.0 v-2.6 M1361.5 501.0 q-0.5 3 -3 3.2 M1374.4 495.8 h1.3 M1363.7 504.4 h1.3 M1379.6 501.0 H1397.9 M1391.1 501.0 V493.3 M1394.4 501.0 v-2.6 M1400.7 501.0 H1414.6 M1411.7 501.0 v-2.6 M1403.7 501.0 q0 -3.6 1.8 -3.6 q1.8 0 1.8 3.6 M1407.0 495.8 h1.3 M1418.6 501.0 H1439.9 M1420.7 501.0 V494.3 M1422.8 501.0 v-2.6 M1423.0 501.0 v-2.6 M1443.1 501.0 H1459.6 M1445.1 501.0 v-2.6 M1449.5 501.0 v-2.6 M1454.8 501.0 v-2.6 M1455.2 501.0 q0 -3.6 1.8 -3.6 q1.8 0 1.8 3.6 M1445.6 501.0 q-0.5 3 -3 3.2 M1448.6 495.8 h1.3 M1459.1 504.4 h1.3 M1462.7 501.0 H1483.8 M1466.6 501.0 V494.2 M1475.2 501.0 v-2.6 M1474.9 501.0 q0 -3.6 1.8 -3.6 q1.8 0 1.8 3.6 M1483.4 495.8 h1.3 M1470.1 495.8 h1.3 M1486.5 501.0 H1492.7 M1491.2 501.0 v-2.6 M1487.4 501.0 v-2.6 M1492.7 501.0 v-2.6 M1489.5 501.0 q0 -3.6 1.8 -3.6 q1.8 0 1.8 3.6 M1489.0 501.0 q-0.5 3 -3 3.2 M1495.7 501.0 H1505.5 M1498.5 501.0 V493.7 M1496.3 501.0 v-2.6 M1501.4 495.8 h1.3 M1499.8 495.8 h1.3 M1508.8 501.0 H1523.3 M1520.0 501.0 v-2.6 M1517.6 501.0 v-2.6 M1511.3 501.0 q-0.5 3 -3 3.2 M1526.5 501.0 H1544.1 M1538.5 501.0 v-2.6 M1535.8 501.0 v-2.6 M1538.1 501.0 q0 -3.6 1.8 -3.6 q1.8 0 1.8 3.6 M1355.0 520.0 H1365.4 M1359.7 520.0 v-2.6 M1355.3 520.0 v-2.6 M1364.3 520.0 v-2.6 M1358.1 520.0 q0 -3.6 1.8 -3.6 q1.8 0 1.8 3.6 M1360.3 514.8 h1.3 M1359.7 514.8 h1.3 M1368.6 520.0 H1389.7 M1387.7 520.0 V511.7 M1386.3 520.0 v-2.6 M1371.7 520.0 q0 -3.6 1.8 -3.6 q1.8 0 1.8 3.6 M1371.1 520.0 q-0.5 3 -3 3.2 M1393.2 520.0 H1406.1 M1401.7 520.0 V511.9 M1405.3 520.0 v-2.6 M1395.7 520.0 q-0.5 3 -3 3.2 M1404.6 514.8 h1.3 M1408.9 520.0 H1430.1 M1427.3 520.0 V513.2 M1422.9 520.0 V513.1 M1418.1 520.0 v-2.6 M1419.9 520.0 v-2.6 M1416.1 520.0 v-2.6 M1415.4 520.0 q0 -3.6 1.8 -3.6 q1.8 0 1.8 3.6 M1433.1 520.0 H1446.5 M1437.6 520.0 v-2.6 M1441.5 520.0 v-2.6 M1434.7 520.0 q0 -3.6 1.8 -3.6 q1.8 0 1.8 3.6 M1450.4 520.0 H1458.1 M1452.8 520.0 V511.7 M1452.5 520.0 v-2.6 M1453.0 520.0 q0 -3.6 1.8 -3.6 q1.8 0 1.8 3.6 M1453.6 514.8 h1.3 M1461.4 520.0 H1475.3 M1463.0 520.0 V513.4 M1463.9 520.0 v-2.6 M1473.9 520.0 v-2.6 M1465.1 520.0 v-2.6 M1463.3 520.0 q0 -3.6 1.8 -3.6 q1.8 0 1.8 3.6 M1463.9 520.0 q-0.5 3 -3 3.2 M1473.3 523.4 h1.3 M1473.4 523.4 h1.3 M1478.3 520.0 H1493.2 M1487.4 520.0 V513.4 M1481.9 520.0 v-2.6 M1479.9 520.0 v-2.6 M1480.7 520.0 v-2.6 M1481.5 520.0 q0 -3.6 1.8 -3.6 q1.8 0 1.8 3.6 M1480.8 520.0 q-0.5 3 -3 3.2 M1486.2 523.4 h1.3 M1496.3 520.0 H1513.1 M1502.3 520.0 V513.5 M1497.0 520.0 v-2.6 M1496.6 520.0 v-2.6 M1509.8 520.0 q0 -3.6 1.8 -3.6 q1.8 0 1.8 3.6 M1517.0 520.0 H1524.7 M1521.9 520.0 V512.4 M1523.4 520.0 V511.6 M1522.3 520.0 v-2.6 M1524.6 520.0 v-2.6 M1521.1 520.0 q0 -3.6 1.8 -3.6 q1.8 0 1.8 3.6 M1518.1 514.8 h1.3 M1524.6 514.8 h1.3 M1527.2 520.0 H1543.2 M1534.2 520.0 V513.4 M1540.7 520.0 v-2.6 M1541.1 520.0 v-2.6 M1537.9 520.0 v-2.6 M1531.1 520.0 q0 -3.6 1.8 -3.6 q1.8 0 1.8 3.6 M1529.7 520.0 q-0.5 3 -3 3.2 M1530.2 523.4 h1.3 M1545.7 520.0 H1552.0 M1551.4 520.0 V512.4 M1545.9 520.0 v-2.6 M1548.2 520.0 q-0.5 3 -3 3.2 M1432.0 539.5 H1444.1 M1435.6 539.5 V531.7 M1435.3 539.5 V531.4 M1435.2 539.5 v-2.6 M1436.2 539.5 q0 -3.6 1.8 -3.6 q1.8 0 1.8 3.6 M1434.5 539.5 q-0.5 3 -3 3.2 M1447.1 539.5 H1463.1 M1462.4 539.5 v-2.6 M1460.8 539.5 v-2.6 M1449.6 539.5 v-2.6 M1453.3 542.9 h1.3 M1462.9 542.9 h1.3 M1466.7 539.5 H1474.0 M1473.2 539.5 v-2.6 M1471.3 539.5 v-2.6 M1472.1 539.5 v-2.6 M1469.2 539.5 q-0.5 3 -3 3.2 M1472.2 534.3 h1.3 M1472.6 542.9 h1.3 M1360.0 559.5 H1378.8 M1362.0 559.5 V552.9 M1366.8 559.5 v-2.6 M1362.0 559.5 v-2.6 M1375.7 559.5 v-2.6 M1370.0 562.9 h1.3 M1365.0 562.9 h1.3 M1381.4 559.5 H1402.3 M1392.4 559.5 v-2.6 M1397.0 559.5 v-2.6 M1391.3 559.5 v-2.6 M1405.9 559.5 H1415.2 M1410.5 559.5 V552.2 M1410.4 559.5 V551.6 M1411.6 559.5 v-2.6 M1408.4 559.5 q-0.5 3 -3 3.2 M1418.2 559.5 H1434.6 M1428.2 559.5 V552.7 M1419.2 559.5 v-2.6 M1422.6 559.5 v-2.6 M1426.2 554.3 h1.3 M1422.9 562.9 h1.3 M1438.2 559.5 H1460.1 M1445.3 559.5 V552.8 M1438.6 559.5 v-2.6 M1448.3 559.5 v-2.6 M1460.0 562.9 h1.3 M1464.0 559.5 H1484.9 M1465.9 559.5 v-2.6 M1479.6 559.5 v-2.6 M1469.5 559.5 v-2.6 M1475.2 559.5 q0 -3.6 1.8 -3.6 q1.8 0 1.8 3.6 M1482.5 554.3 h1.3 M1487.7 559.5 H1508.1 M1495.9 559.5 V552.7 M1506.6 559.5 V551.6 M1493.9 559.5 v-2.6 M1490.6 559.5 v-2.6 M1493.9 559.5 q0 -3.6 1.8 -3.6 q1.8 0 1.8 3.6 M1511.1 559.5 H1522.5 M1512.8 559.5 V551.1 M1519.0 559.5 V551.2 M1514.0 559.5 v-2.6 M1511.8 559.5 v-2.6 M1518.5 559.5 q0 -3.6 1.8 -3.6 q1.8 0 1.8 3.6 M1513.6 559.5 q-0.5 3 -3 3.2 M1519.7 554.3 h1.3 M1525.4 559.5 H1532.3 M1529.6 559.5 V552.7 M1528.4 559.5 v-2.6 M1527.6 559.5 v-2.6 M1531.5 554.3 h1.3 M1535.7 559.5 H1545.0 M1542.2 559.5 V552.9 M1539.5 559.5 v-2.6 M1541.4 559.5 v-2.6 M1537.0 559.5 v-2.6 M1536.9 562.9 h1.3 M1538.9 562.9 h1.3 M1358.0 579.0 H1379.6 M1366.9 579.0 V572.0 M1370.0 579.0 v-2.6 M1366.5 579.0 v-2.6 M1361.8 579.0 q0 -3.6 1.8 -3.6 q1.8 0 1.8 3.6 M1360.5 579.0 q-0.5 3 -3 3.2 M1369.9 582.4 h1.3 M1382.6 579.0 H1400.8 M1385.5 579.0 V572.1 M1384.7 579.0 V571.8 M1388.4 579.0 v-2.6 M1395.1 579.0 q0 -3.6 1.8 -3.6 q1.8 0 1.8 3.6 M1385.1 579.0 q-0.5 3 -3 3.2 M1404.4 579.0 H1417.0 M1413.5 579.0 V572.1 M1408.0 579.0 V571.0 M1407.9 579.0 v-2.6 M1416.6 579.0 v-2.6 M1409.7 579.0 q0 -3.6 1.8 -3.6 q1.8 0 1.8 3.6 M1419.6 579.0 H1440.0 M1427.9 579.0 V571.6 M1438.6 579.0 V570.8 M1422.2 579.0 v-2.6 M1433.1 579.0 q0 -3.6 1.8 -3.6 q1.8 0 1.8 3.6 M1429.6 582.4 h1.3 M1438.6 573.8 h1.3 M1443.3 579.0 H1456.8 M1446.9 579.0 V572.3 M1445.7 579.0 V571.5 M1444.7 579.0 v-2.6 M1454.4 579.0 v-2.6 M1452.7 579.0 v-2.6 M1460.1 579.0 H1466.7 M1461.9 579.0 V570.7 M1464.8 579.0 v-2.6 M1466.5 579.0 v-2.6 M1464.2 579.0 v-2.6 M1462.2 579.0 q0 -3.6 1.8 -3.6 q1.8 0 1.8 3.6 M1469.3 579.0 H1483.7 M1475.0 579.0 V572.1 M1469.3 579.0 v-2.6 M1477.1 579.0 v-2.6 M1483.7 579.0 v-2.6 M1473.6 579.0 q0 -3.6 1.8 -3.6 q1.8 0 1.8 3.6 M1486.9 579.0 H1496.7 M1487.7 579.0 V571.7 M1489.9 579.0 v-2.6 M1487.1 579.0 v-2.6 M1491.8 579.0 v-2.6 M1489.4 579.0 q-0.5 3 -3 3.2 M1489.2 582.4 h1.3 M1499.7 579.0 H1513.6 M1509.5 579.0 V571.8 M1502.5 579.0 v-2.6 M1510.8 579.0 v-2.6 M1516.9 579.0 H1526.1 M1519.3 579.0 V572.1 M1517.9 579.0 v-2.6 M1522.6 579.0 v-2.6 M1520.7 573.8 h1.3 M1530.0 579.0 H1538.4 M1530.9 579.0 V572.5 M1534.9 579.0 V571.7 M1530.5 579.0 v-2.6 M1533.3 579.0 v-2.6 M1537.5 579.0 v-2.6 M1542.2 579.0 H1548.0 M1545.8 579.0 V571.5 M1542.4 579.0 v-2.6 M1546.1 579.0 v-2.6 M1543.9 579.0 q0 -3.6 1.8 -3.6 q1.8 0 1.8 3.6 M1544.7 579.0 q-0.5 3 -3 3.2 M1373.0 598.0 H1380.3 M1376.0 598.0 v-2.6 M1379.4 598.0 v-2.6 M1375.6 592.8 h1.3 M1384.0 598.0 H1396.9 M1390.1 598.0 v-2.6 M1388.8 598.0 v-2.6 M1395.9 598.0 v-2.6 M1388.2 598.0 q0 -3.6 1.8 -3.6 q1.8 0 1.8 3.6 M1400.4 598.0 H1410.3 M1401.2 598.0 V591.4 M1401.4 598.0 V589.7 M1402.3 598.0 v-2.6 M1401.0 598.0 v-2.6 M1402.9 598.0 q-0.5 3 -3 3.2 M1409.9 592.8 h1.3 M1413.2 598.0 H1430.7 M1428.9 598.0 V590.9 M1426.4 598.0 v-2.6 M1429.2 598.0 v-2.6 M1424.3 598.0 v-2.6 M1415.7 598.0 q-0.5 3 -3 3.2 M1433.3 598.0 H1450.8 M1449.5 598.0 V590.7 M1438.0 598.0 V590.6 M1435.7 598.0 v-2.6 M1442.0 598.0 v-2.6 M1446.9 598.0 q0 -3.6 1.8 -3.6 q1.8 0 1.8 3.6 M1435.8 598.0 q-0.5 3 -3 3.2 M1446.8 592.8 h1.3 M1439.1 601.4 h1.3 M1453.8 598.0 H1472.3 M1457.5 598.0 v-2.6 M1467.8 598.0 v-2.6 M1458.4 598.0 v-2.6 M1455.3 598.0 q0 -3.6 1.8 -3.6 q1.8 0 1.8 3.6 M1456.8 601.4 h1.3 M1475.0 598.0 H1482.2 M1475.7 598.0 v-2.6 M1478.2 598.0 q0 -3.6 1.8 -3.6 q1.8 0 1.8 3.6 M1477.5 598.0 q-0.5 3 -3 3.2 M1484.9 598.0 H1498.2 M1494.6 598.0 V589.8 M1495.0 598.0 v-2.6 M1495.3 598.0 v-2.6 M1488.8 598.0 v-2.6 M1488.4 598.0 q0 -3.6 1.8 -3.6 q1.8 0 1.8 3.6 M1487.4 598.0 q-0.5 3 -3 3.2 M1487.5 601.4 h1.3 M1501.1 598.0 H1509.6 M1504.0 598.0 V590.7 M1505.4 598.0 v-2.6 M1505.7 598.0 q0 -3.6 1.8 -3.6 q1.8 0 1.8 3.6 M1512.2 598.0 H1525.8 M1523.3 598.0 V589.7 M1524.1 598.0 v-2.6 M1513.7 598.0 q0 -3.6 1.8 -3.6 q1.8 0 1.8 3.6 M1514.8 601.4 h1.3 M1519.2 601.4 h1.3 M1529.2 598.0 H1534.0 M1532.3 598.0 v-2.6 M1531.7 598.0 q-0.5 3 -3 3.2 M1353.0 617.0 H1361.3 M1360.8 617.0 V610.4 M1358.4 617.0 v-2.6 M1354.7 617.0 v-2.6 M1353.1 617.0 v-2.6 M1356.9 617.0 q0 -3.6 1.8 -3.6 q1.8 0 1.8 3.6 M1355.5 617.0 q-0.5 3 -3 3.2 M1353.6 620.4 h1.3 M1364.5 617.0 H1378.2 M1366.3 617.0 V609.7 M1372.0 617.0 V609.2 M1373.5 617.0 v-2.6 M1368.1 617.0 q0 -3.6 1.8 -3.6 q1.8 0 1.8 3.6 M1368.7 611.8 h1.3 M1368.8 611.8 h1.3 M1381.3 617.0 H1393.9 M1389.3 617.0 V609.7 M1383.9 617.0 v-2.6 M1381.4 617.0 v-2.6 M1383.8 617.0 q-0.5 3 -3 3.2 M1397.0 617.0 H1417.2 M1412.3 617.0 V610.2 M1398.5 617.0 V610.2 M1398.8 617.0 v-2.6 M1409.6 617.0 v-2.6 M1406.2 617.0 q0 -3.6 1.8 -3.6 q1.8 0 1.8 3.6 M1399.5 617.0 q-0.5 3 -3 3.2 M1400.3 620.4 h1.3 M1419.8 617.0 H1431.9 M1423.6 617.0 V608.8 M1431.6 617.0 v-2.6 M1421.2 617.0 q0 -3.6 1.8 -3.6 q1.8 0 1.8 3.6 M1420.8 611.8 h1.3 M1435.4 617.0 H1455.7 M1447.9 617.0 V609.3 M1452.2 617.0 v-2.6 M1440.0 617.0 q0 -3.6 1.8 -3.6 q1.8 0 1.8 3.6 M1437.9 617.0 q-0.5 3 -3 3.2 M1438.6 620.4 h1.3 M1438.5 611.8 h1.3 M1459.4 617.0 H1468.5 M1467.0 617.0 v-2.6 M1460.5 617.0 v-2.6 M1464.9 617.0 v-2.6 M1465.3 620.4 h1.3 M1471.4 617.0 H1483.6 M1476.9 617.0 V609.6 M1471.4 617.0 v-2.6 M1480.7 611.8 h1.3 M1486.8 617.0 H1495.7 M1490.5 617.0 V610.4 M1490.1 617.0 V609.8 M1491.3 617.0 v-2.6 M1492.6 617.0 v-2.6 M1488.4 617.0 q0 -3.6 1.8 -3.6 q1.8 0 1.8 3.6 M1493.7 611.8 h1.3 M1498.3 617.0 H1512.3 M1507.3 617.0 V608.9 M1499.1 617.0 V610.4 M1508.5 617.0 v-2.6 M1509.7 617.0 v-2.6 M1501.0 617.0 v-2.6 M1515.8 617.0 H1533.4 M1517.4 617.0 V609.8 M1518.6 617.0 v-2.6 M1531.6 617.0 v-2.6 M1527.9 617.0 q0 -3.6 1.8 -3.6 q1.8 0 1.8 3.6 M1518.3 617.0 q-0.5 3 -3 3.2 M1532.8 620.4 h1.3 M1526.2 611.8 h1.3 M1536.2 617.0 H1548.2 M1538.7 617.0 V610.2 M1544.4 617.0 v-2.6 M1546.9 617.0 v-2.6 M1543.5 617.0 q0 -3.6 1.8 -3.6 q1.8 0 1.8 3.6 M1538.7 617.0 q-0.5 3 -3 3.2 M1536.8 611.8 h1.3 M1547.8 620.4 h1.3 M1426.0 636.0 H1443.0 M1442.9 636.0 v-2.6 M1436.7 636.0 v-2.6 M1437.4 636.0 q0 -3.6 1.8 -3.6 q1.8 0 1.8 3.6 M1428.5 636.0 q-0.5 3 -3 3.2 M1435.8 639.4 h1.3 M1446.7 636.0 H1459.7 M1454.6 636.0 V627.6 M1457.4 636.0 v-2.6 M1450.0 636.0 v-2.6 M1458.8 630.8 h1.3 M1456.3 630.8 h1.3 M1462.6 636.0 H1473.2 M1467.1 636.0 V628.8 M1463.5 636.0 V628.5 M1469.5 636.0 v-2.6 M1462.8 636.0 v-2.6 M1462.6 636.0 v-2.6 M1464.3 636.0 q0 -3.6 1.8 -3.6 q1.8 0 1.8 3.6 M1465.1 636.0 q-0.5 3 -3 3.2 M1476.4 636.0 H1482.0 M1477.8 636.0 V628.3 M1477.2 636.0 v-2.6 M1476.4 636.0 v-2.6 M1476.9 630.8 h1.3 M1333.0 655.0 H1351.5 M1347.7 655.0 V646.6 M1334.5 655.0 V646.9 M1344.0 655.0 v-2.6 M1343.7 655.0 v-2.6 M1337.6 649.8 h1.3 M1354.1 655.0 H1368.6 M1357.1 655.0 V648.2 M1366.9 655.0 V648.3 M1362.1 655.0 v-2.6 M1367.7 655.0 v-2.6 M1356.1 655.0 v-2.6 M1361.5 655.0 q0 -3.6 1.8 -3.6 q1.8 0 1.8 3.6 M1360.1 649.8 h1.3 M1361.5 658.4 h1.3 M1372.0 655.0 H1393.9 M1387.5 655.0 V648.5 M1390.2 655.0 V647.0 M1373.8 655.0 v-2.6 M1386.4 655.0 v-2.6 M1390.9 655.0 q0 -3.6 1.8 -3.6 q1.8 0 1.8 3.6 M1374.5 655.0 q-0.5 3 -3 3.2 M1372.9 658.4 h1.3 M1388.4 649.8 h1.3 M1397.7 655.0 H1415.1 M1408.6 655.0 V647.1 M1411.4 655.0 v-2.6 M1406.8 655.0 v-2.6 M1402.3 655.0 v-2.6 M1417.7 655.0 H1431.8 M1421.6 655.0 V648.0 M1420.6 655.0 v-2.6 M1420.0 655.0 v-2.6 M1430.6 655.0 v-2.6 M1422.6 655.0 q0 -3.6 1.8 -3.6 q1.8 0 1.8 3.6 M1430.5 649.8 h1.3 M1435.4 655.0 H1452.0 M1443.3 655.0 V647.4 M1436.0 655.0 V648.4 M1439.3 655.0 v-2.6 M1450.1 655.0 v-2.6 M1448.5 655.0 v-2.6 M1443.8 655.0 q0 -3.6 1.8 -3.6 q1.8 0 1.8 3.6 M1454.7 655.0 H1461.2 M1460.7 655.0 v-2.6 M1456.9 655.0 v-2.6 M1455.6 655.0 v-2.6 M1455.8 655.0 q0 -3.6 1.8 -3.6 q1.8 0 1.8 3.6 M1455.0 658.4 h1.3 M1455.0 649.8 h1.3 M1464.8 655.0 H1474.0 M1473.5 655.0 v-2.6 M1465.8 655.0 v-2.6 M1466.7 655.0 v-2.6 M1466.0 655.0 q0 -3.6 1.8 -3.6 q1.8 0 1.8 3.6 M1465.6 649.8 h1.3 M1470.6 658.4 h1.3 M1476.7 655.0 H1495.4 M1482.4 655.0 V647.8 M1477.1 655.0 v-2.6 M1481.5 655.0 v-2.6 M1488.2 655.0 q0 -3.6 1.8 -3.6 q1.8 0 1.8 3.6 M1479.2 655.0 q-0.5 3 -3 3.2 M1491.1 649.8 h1.3 M1498.6 655.0 H1509.2 M1498.9 655.0 v-2.6 M1504.1 655.0 v-2.6 M1502.7 655.0 q0 -3.6 1.8 -3.6 q1.8 0 1.8 3.6 M1501.1 655.0 q-0.5 3 -3 3.2 M1500.9 649.8 h1.3 M1499.5 649.8 h1.3 M1511.9 655.0 H1518.0 M1513.9 655.0 V647.0 M1512.0 655.0 v-2.6 M1513.9 655.0 q0 -3.6 1.8 -3.6 q1.8 0 1.8 3.6 M1521.9 655.0 H1537.4 M1530.8 655.0 V648.2 M1536.4 655.0 v-2.6 M1524.8 655.0 q0 -3.6 1.8 -3.6 q1.8 0 1.8 3.6 M1540.6 655.0 H1562.5 M1547.8 655.0 v-2.6 M1542.7 655.0 v-2.6 M1560.9 655.0 v-2.6 M1560.0 658.4 h1.3 M1565.3 655.0 H1573.0 M1568.3 655.0 V646.7 M1572.6 655.0 v-2.6 M1568.5 655.0 q0 -3.6 1.8 -3.6 q1.8 0 1.8 3.6 M1570.3 658.4 h1.3 M1567.8 658.4 h1.3 M1310.0 675.0 H1326.6 M1313.1 675.0 V667.6 M1319.6 675.0 v-2.6 M1312.1 675.0 v-2.6 M1322.1 675.0 q0 -3.6 1.8 -3.6 q1.8 0 1.8 3.6 M1312.5 675.0 q-0.5 3 -3 3.2 M1329.5 675.0 H1347.6 M1342.3 675.0 V666.6 M1335.4 675.0 v-2.6 M1338.9 675.0 v-2.6 M1332.4 675.0 v-2.6 M1333.2 675.0 q0 -3.6 1.8 -3.6 q1.8 0 1.8 3.6 M1347.5 678.4 h1.3 M1341.4 678.4 h1.3 M1350.3 675.0 H1358.7 M1356.2 675.0 V667.6 M1351.2 675.0 v-2.6 M1352.8 675.0 q-0.5 3 -3 3.2 M1354.2 678.4 h1.3 M1362.5 675.0 H1375.4 M1368.9 675.0 V667.2 M1362.7 675.0 v-2.6 M1365.8 675.0 v-2.6 M1365.0 675.0 q-0.5 3 -3 3.2 M1379.3 675.0 H1392.2 M1389.8 675.0 V667.2 M1387.5 675.0 V666.7 M1388.3 675.0 v-2.6 M1390.3 675.0 v-2.6 M1388.1 675.0 v-2.6 M1382.6 669.8 h1.3 M1396.0 675.0 H1405.9 M1402.9 675.0 V667.2 M1398.7 675.0 V667.7 M1396.2 675.0 v-2.6 M1404.5 675.0 v-2.6 M1400.9 675.0 q0 -3.6 1.8 -3.6 q1.8 0 1.8 3.6 M1399.3 678.4 h1.3 M1404.2 669.8 h1.3 M1408.6 675.0 H1418.6 M1410.5 675.0 V666.9 M1413.8 675.0 v-2.6 M1413.0 675.0 q0 -3.6 1.8 -3.6 q1.8 0 1.8 3.6 M1413.3 678.4 h1.3 M1416.5 678.4 h1.3 M1421.6 675.0 H1439.5 M1425.6 675.0 V667.1 M1428.7 675.0 V667.0 M1434.6 675.0 v-2.6 M1426.5 678.4 h1.3 M1442.0 675.0 H1454.7 M1449.8 675.0 V667.2 M1449.3 675.0 V668.3 M1451.4 675.0 v-2.6 M1453.9 675.0 v-2.6 M1444.9 675.0 q0 -3.6 1.8 -3.6 q1.8 0 1.8 3.6 M1447.9 678.4 h1.3 M1458.6 675.0 H1465.7 M1461.9 675.0 V667.4 M1464.4 675.0 v-2.6 M1461.6 675.0 q0 -3.6 1.8 -3.6 q1.8 0 1.8 3.6 M1461.9 678.4 h1.3 M1469.0 675.0 H1477.0 M1472.0 675.0 V666.8 M1471.4 675.0 V667.7 M1476.9 675.0 v-2.6 M1474.4 675.0 v-2.6 M1473.2 675.0 q0 -3.6 1.8 -3.6 q1.8 0 1.8 3.6 M1471.0 678.4 h1.3 M1480.2 675.0 H1493.1 M1491.8 675.0 v-2.6 M1482.2 675.0 v-2.6 M1484.1 675.0 v-2.6 M1482.0 675.0 q0 -3.6 1.8 -3.6 q1.8 0 1.8 3.6 M1490.3 678.4 h1.3 M1496.8 675.0 H1513.0 M1497.0 675.0 v-2.6 M1512.2 675.0 v-2.6 M1507.4 675.0 v-2.6 M1499.1 675.0 q0 -3.6 1.8 -3.6 q1.8 0 1.8 3.6 M1499.3 675.0 q-0.5 3 -3 3.2 M1515.7 675.0 H1529.0 M1518.8 675.0 V667.7 M1518.0 675.0 v-2.6 M1527.5 675.0 v-2.6 M1523.8 675.0 v-2.6 M1526.2 669.8 h1.3 M1518.3 669.8 h1.3 M1532.3 675.0 H1550.1 M1544.1 675.0 V668.3 M1534.8 675.0 V667.7 M1540.7 675.0 v-2.6 M1553.7 675.0 H1563.6 M1559.0 675.0 V666.8 M1555.3 675.0 v-2.6 M1558.8 675.0 q0 -3.6 1.8 -3.6 q1.8 0 1.8 3.6 M1562.0 678.4 h1.3 M1566.8 675.0 H1588.1 M1580.4 675.0 v-2.6 M1569.3 675.0 q-0.5 3 -3 3.2 M1567.7 669.8 h1.3 M1588.1 669.8 h1.3 M1590.8 675.0 H1596.0 M1591.4 675.0 V667.1 M1591.4 675.0 v-2.6 M1591.3 675.0 v-2.6 M1594.2 675.0 v-2.6 M1592.7 675.0 q0 -3.6 1.8 -3.6 q1.8 0 1.8 3.6 M1349.0 694.5 H1360.5 M1355.3 694.5 V686.3 M1353.1 694.5 v-2.6 M1354.7 694.5 v-2.6 M1357.4 694.5 q0 -3.6 1.8 -3.6 q1.8 0 1.8 3.6 M1360.2 689.3 h1.3 M1364.2 694.5 H1375.5 M1372.0 694.5 V687.7 M1365.1 694.5 v-2.6 M1375.4 694.5 v-2.6 M1368.7 694.5 v-2.6 M1366.7 694.5 q-0.5 3 -3 3.2 M1364.7 697.9 h1.3 M1364.2 697.9 h1.3 M1379.3 694.5 H1395.1 M1393.7 694.5 v-2.6 M1389.0 694.5 v-2.6 M1389.0 694.5 v-2.6 M1393.1 697.9 h1.3 M1380.0 689.3 h1.3 M1398.5 694.5 H1407.3 M1405.8 694.5 V687.2 M1406.5 694.5 v-2.6 M1401.0 694.5 q-0.5 3 -3 3.2 M1411.0 694.5 H1426.0 M1423.5 694.5 V687.6 M1415.7 694.5 v-2.6 M1419.0 694.5 q0 -3.6 1.8 -3.6 q1.8 0 1.8 3.6 M1429.2 694.5 H1443.6 M1437.5 694.5 v-2.6 M1442.4 694.5 v-2.6 M1430.4 694.5 q0 -3.6 1.8 -3.6 q1.8 0 1.8 3.6 M1431.7 694.5 q-0.5 3 -3 3.2 M1443.5 689.3 h1.3 M1431.4 689.3 h1.3 M1446.9 694.5 H1454.2 M1448.7 694.5 V687.7 M1447.5 694.5 V688.0 M1451.8 694.5 v-2.6 M1454.1 694.5 v-2.6 M1453.2 694.5 v-2.6 M1448.3 694.5 q0 -3.6 1.8 -3.6 q1.8 0 1.8 3.6 M1452.2 697.9 h1.3 M1457.8 694.5 H1466.8 M1464.8 694.5 v-2.6 M1464.2 694.5 v-2.6 M1469.8 694.5 H1484.7 M1476.7 694.5 V686.1 M1473.8 694.5 V686.1 M1470.2 694.5 v-2.6 M1470.7 694.5 v-2.6 M1482.9 694.5 v-2.6 M1474.4 689.3 h1.3 M1487.4 694.5 H1507.2 M1499.4 694.5 V687.4 M1505.7 694.5 V686.5 M1500.8 694.5 v-2.6 M1490.3 694.5 v-2.6 M1489.9 694.5 q-0.5 3 -3 3.2 M1490.7 689.3 h1.3 M1496.9 689.3 h1.3 M1510.4 694.5 H1520.7 M1513.6 694.5 V687.9 M1517.7 694.5 v-2.6 M1518.9 694.5 v-2.6 M1513.8 694.5 v-2.6 M1524.1 694.5 H1535.1 M1534.3 694.5 V687.5 M1528.5 694.5 V687.2 M1533.0 694.5 v-2.6 M1525.1 694.5 q0 -3.6 1.8 -3.6 q1.8 0 1.8 3.6 M1526.6 694.5 q-0.5 3 -3 3.2 M1525.9 689.3 h1.3 M1538.7 694.5 H1557.0 M1553.6 694.5 V686.4 M1541.4 694.5 v-2.6 M1556.5 694.5 v-2.6 M1553.3 694.5 v-2.6 M1550.8 694.5 q0 -3.6 1.8 -3.6 q1.8 0 1.8 3.6 M1540.3 689.3 h1.3 M1553.3 697.9 h1.3 M1336.0 713.0 H1356.9 M1342.7 713.0 V706.4 M1345.7 713.0 v-2.6 M1340.3 713.0 v-2.6 M1349.7 713.0 q0 -3.6 1.8 -3.6 q1.8 0 1.8 3.6 M1347.3 707.8 h1.3 M1359.9 713.0 H1366.9 M1363.9 713.0 V704.7 M1365.8 713.0 V705.5 M1363.5 713.0 v-2.6 M1361.4 713.0 v-2.6 M1361.2 713.0 q0 -3.6 1.8 -3.6 q1.8 0 1.8 3.6 M1362.5 707.8 h1.3 M1370.0 713.0 H1384.3 M1373.8 713.0 V704.7 M1375.4 713.0 v-2.6 M1371.6 713.0 v-2.6 M1387.3 713.0 H1393.8 M1390.6 713.0 V706.5 M1388.6 713.0 v-2.6 M1391.0 716.4 h1.3 M1392.3 716.4 h1.3 M1397.7 713.0 H1416.0 M1402.6 713.0 V706.4 M1415.9 713.0 v-2.6 M1399.1 713.0 q0 -3.6 1.8 -3.6 q1.8 0 1.8 3.6 M1400.2 713.0 q-0.5 3 -3 3.2 M1413.6 716.4 h1.3 M1419.9 713.0 H1440.5 M1433.1 713.0 v-2.6 M1438.9 713.0 v-2.6 M1434.4 713.0 v-2.6 M1426.2 713.0 q0 -3.6 1.8 -3.6 q1.8 0 1.8 3.6 M1422.4 713.0 q-0.5 3 -3 3.2 M1444.4 713.0 H1461.1 M1447.8 713.0 V704.8 M1450.7 713.0 V706.0 M1448.1 713.0 v-2.6 M1445.0 713.0 v-2.6 M1448.7 713.0 v-2.6 M1456.9 713.0 q0 -3.6 1.8 -3.6 q1.8 0 1.8 3.6 M1464.0 713.0 H1478.2 M1465.2 713.0 V706.2 M1474.5 713.0 V704.6 M1474.6 713.0 v-2.6 M1472.4 713.0 v-2.6 M1470.3 713.0 v-2.6 M1467.6 716.4 h1.3 M1481.4 713.0 H1490.1 M1488.1 713.0 V704.7 M1485.5 713.0 v-2.6 M1494.0 713.0 H1503.5 M1502.1 713.0 V706.2 M1503.1 713.0 v-2.6 M1502.8 713.0 v-2.6 M1495.1 713.0 q0 -3.6 1.8 -3.6 q1.8 0 1.8 3.6 M1496.5 713.0 q-0.5 3 -3 3.2 M1497.1 716.4 h1.3 M1506.2 713.0 H1518.1 M1509.1 713.0 V706.4 M1511.6 713.0 v-2.6 M1516.8 713.0 v-2.6 M1511.4 713.0 v-2.6 M1510.5 713.0 q0 -3.6 1.8 -3.6 q1.8 0 1.8 3.6 M1508.7 713.0 q-0.5 3 -3 3.2 M1521.0 713.0 H1540.4 M1536.3 713.0 V706.0 M1527.2 713.0 v-2.6 M1523.5 713.0 q-0.5 3 -3 3.2 M1522.1 707.8 h1.3 M1534.0 716.4 h1.3 M1543.6 713.0 H1554.2 M1551.4 713.0 V704.6 M1554.1 713.0 v-2.6 M1554.2 713.0 v-2.6 M1546.1 713.0 q-0.5 3 -3 3.2 M1548.0 716.4 h1.3 M1558.0 713.0 H1570.0 M1569.3 713.0 V706.5 M1562.1 713.0 v-2.6 M1559.6 713.0 v-2.6 M1558.0 713.0 v-2.6 M1435.0 733.0 H1441.6 M1436.7 733.0 V725.4 M1436.3 733.0 V726.1 M1439.7 733.0 v-2.6 M1436.2 733.0 q0 -3.6 1.8 -3.6 q1.8 0 1.8 3.6 M1437.5 733.0 q-0.5 3 -3 3.2 M1439.9 727.8 h1.3 M1436.2 736.4 h1.3 M1445.2 733.0 H1461.2 M1454.4 733.0 V726.1 M1456.3 733.0 v-2.6 M1456.3 733.0 q0 -3.6 1.8 -3.6 q1.8 0 1.8 3.6 M1458.2 736.4 h1.3 M1458.7 727.8 h1.3 M1464.4 733.0 H1470.7 M1465.6 733.0 V725.2 M1466.3 733.0 V725.4 M1464.7 733.0 v-2.6 M1468.8 733.0 v-2.6 M1467.7 736.4 h1.3 M1359.0 753.0 H1366.9 M1365.2 753.0 V744.8 M1365.2 753.0 v-2.6 M1365.9 753.0 v-2.6 M1365.9 747.8 h1.3 M1370.2 753.0 H1384.4 M1370.9 753.0 V744.6 M1379.0 753.0 v-2.6 M1374.4 753.0 q0 -3.6 1.8 -3.6 q1.8 0 1.8 3.6 M1386.9 753.0 H1407.7 M1392.6 753.0 V744.8 M1398.9 753.0 v-2.6 M1397.8 753.0 v-2.6 M1401.5 753.0 v-2.6 M1402.5 753.0 q0 -3.6 1.8 -3.6 q1.8 0 1.8 3.6 M1410.6 753.0 H1424.1 M1412.5 753.0 V746.3 M1417.9 753.0 v-2.6 M1413.8 753.0 q0 -3.6 1.8 -3.6 q1.8 0 1.8 3.6 M1420.7 756.4 h1.3 M1427.8 753.0 H1448.8 M1442.2 753.0 V745.3 M1440.4 753.0 V746.4 M1444.1 753.0 v-2.6 M1432.9 753.0 q0 -3.6 1.8 -3.6 q1.8 0 1.8 3.6 M1430.3 753.0 q-0.5 3 -3 3.2 M1445.5 747.8 h1.3 M1452.8 753.0 H1463.9 M1461.9 753.0 V746.4 M1458.5 753.0 V744.6 M1455.6 753.0 v-2.6 M1457.5 753.0 v-2.6 M1455.3 753.0 q-0.5 3 -3 3.2 M1454.9 756.4 h1.3 M1455.0 747.8 h1.3 M1466.8 753.0 H1479.5 M1476.4 753.0 V744.6 M1474.7 753.0 V744.9 M1467.2 753.0 v-2.6 M1469.3 753.0 q-0.5 3 -3 3.2 M1474.7 747.8 h1.3 M1477.0 756.4 h1.3 M1482.2 753.0 H1490.1 M1484.0 753.0 v-2.6 M1482.5 753.0 v-2.6 M1484.5 753.0 q0 -3.6 1.8 -3.6 q1.8 0 1.8 3.6 M1484.7 753.0 q-0.5 3 -3 3.2 M1493.5 753.0 H1514.8 M1495.7 753.0 V745.3 M1502.9 753.0 v-2.6 M1509.8 753.0 q0 -3.6 1.8 -3.6 q1.8 0 1.8 3.6 M1499.6 756.4 h1.3 M1495.4 747.8 h1.3 M1518.6 753.0 H1534.3 M1528.6 753.0 V746.1 M1524.3 753.0 v-2.6 M1532.6 753.0 v-2.6 M1523.3 753.0 v-2.6 M1529.2 753.0 q0 -3.6 1.8 -3.6 q1.8 0 1.8 3.6 M1521.1 753.0 q-0.5 3 -3 3.2 M1522.0 747.8 h1.3 M1537.4 753.0 H1547.0 M1538.9 753.0 v-2.6 M1546.5 753.0 v-2.6 M1540.2 753.0 q0 -3.6 1.8 -3.6 q1.8 0 1.8 3.6 M1539.9 753.0 q-0.5 3 -3 3.2 M1356.0 771.0 H1374.4 M1366.1 771.0 V763.3 M1364.1 771.0 v-2.6 M1357.1 771.0 v-2.6 M1363.3 771.0 q0 -3.6 1.8 -3.6 q1.8 0 1.8 3.6 M1377.6 771.0 H1399.5 M1386.8 771.0 V763.2 M1392.4 771.0 v-2.6 M1379.7 765.8 h1.3 M1397.8 765.8 h1.3 M1402.4 771.0 H1418.5 M1409.1 771.0 V764.3 M1414.7 771.0 v-2.6 M1411.8 771.0 v-2.6 M1415.0 771.0 q0 -3.6 1.8 -3.6 q1.8 0 1.8 3.6 M1416.0 774.4 h1.3 M1421.9 771.0 H1429.7 M1427.1 771.0 V763.9 M1424.8 771.0 V763.8 M1426.2 771.0 v-2.6 M1424.9 771.0 v-2.6 M1424.4 771.0 v-2.6 M1424.9 774.4 h1.3 M1433.0 771.0 H1451.8 M1443.7 771.0 V763.3 M1435.0 771.0 V762.7 M1451.2 771.0 v-2.6 M1444.4 771.0 v-2.6 M1438.8 771.0 q0 -3.6 1.8 -3.6 q1.8 0 1.8 3.6 M1454.4 771.0 H1464.5 M1457.6 771.0 V763.4 M1457.7 771.0 V763.3 M1459.6 771.0 v-2.6 M1459.6 771.0 v-2.6 M1456.9 771.0 q-0.5 3 -3 3.2 M1454.8 765.8 h1.3 M1467.6 771.0 H1473.8 M1469.1 771.0 v-2.6 M1470.2 771.0 v-2.6 M1470.7 771.0 v-2.6 M1477.6 771.0 H1499.1 M1486.3 771.0 V763.0 M1496.5 771.0 V763.3 M1489.0 771.0 v-2.6 M1495.1 771.0 v-2.6 M1481.3 771.0 v-2.6 M1495.7 771.0 q0 -3.6 1.8 -3.6 q1.8 0 1.8 3.6 M1481.4 765.8 h1.3 M1483.9 774.4 h1.3 M1503.0 771.0 H1517.1 M1511.8 771.0 V763.5 M1514.2 771.0 V764.1 M1508.8 771.0 v-2.6 M1509.7 771.0 q0 -3.6 1.8 -3.6 q1.8 0 1.8 3.6 M1505.5 771.0 q-0.5 3 -3 3.2 M1517.0 765.8 h1.3 M1503.6 774.4 h1.3 M1520.8 771.0 H1531.7 M1525.1 771.0 v-2.6 M1521.9 771.0 v-2.6 M1522.0 771.0 q0 -3.6 1.8 -3.6 q1.8 0 1.8 3.6 M1523.3 771.0 q-0.5 3 -3 3.2 M1527.0 765.8 h1.3 M1530.6 765.8 h1.3 M1534.4 771.0 H1543.6 M1535.8 771.0 v-2.6 M1536.9 771.0 q-0.5 3 -3 3.2 M1362.0 790.5 H1383.2 M1379.1 790.5 V782.8 M1378.8 790.5 V783.9 M1376.5 790.5 v-2.6 M1364.5 790.5 q-0.5 3 -3 3.2 M1386.2 790.5 H1394.9 M1391.5 790.5 V782.3 M1386.7 790.5 v-2.6 M1387.9 790.5 v-2.6 M1391.6 790.5 v-2.6 M1388.2 790.5 q0 -3.6 1.8 -3.6 q1.8 0 1.8 3.6 M1388.7 790.5 q-0.5 3 -3 3.2 M1398.1 790.5 H1414.0 M1401.9 790.5 V783.7 M1411.7 790.5 v-2.6 M1403.1 790.5 v-2.6 M1412.4 790.5 v-2.6 M1400.6 790.5 q-0.5 3 -3 3.2 M1402.1 785.3 h1.3 M1413.7 793.9 h1.3 M1417.5 790.5 H1434.3 M1424.5 790.5 V783.2 M1425.6 790.5 v-2.6 M1430.8 790.5 v-2.6 M1421.6 790.5 v-2.6 M1423.1 790.5 q0 -3.6 1.8 -3.6 q1.8 0 1.8 3.6 M1420.0 790.5 q-0.5 3 -3 3.2 M1424.2 793.9 h1.3 M1437.3 790.5 H1457.2 M1445.4 790.5 V783.9 M1445.7 790.5 v-2.6 M1441.1 793.9 h1.3 M1460.1 790.5 H1466.7 M1465.4 790.5 v-2.6 M1461.7 790.5 v-2.6 M1461.6 790.5 q0 -3.6 1.8 -3.6 q1.8 0 1.8 3.6 M1470.0 790.5 H1483.5 M1472.5 790.5 V783.3 M1475.5 790.5 v-2.6 M1478.5 790.5 v-2.6 M1477.8 790.5 v-2.6 M1475.5 790.5 q0 -3.6 1.8 -3.6 q1.8 0 1.8 3.6 M1472.5 790.5 q-0.5 3 -3 3.2 M1479.1 785.3 h1.3 M1487.5 790.5 H1503.0 M1496.5 790.5 V783.3 M1491.5 790.5 V782.8 M1489.4 790.5 v-2.6 M1506.3 790.5 H1516.6 M1507.1 790.5 V782.6 M1508.2 790.5 V784.0 M1507.2 790.5 v-2.6 M1508.1 790.5 v-2.6 M1515.1 790.5 v-2.6 M1511.5 790.5 q0 -3.6 1.8 -3.6 q1.8 0 1.8 3.6 M1508.8 790.5 q-0.5 3 -3 3.2 M1515.8 785.3 h1.3 M1514.1 793.9 h1.3 M1520.2 790.5 H1527.6 M1521.5 790.5 V782.6 M1522.9 790.5 v-2.6 M1526.5 790.5 v-2.6 M1523.4 790.5 q0 -3.6 1.8 -3.6 q1.8 0 1.8 3.6 M1531.5 790.5 H1540.4 M1537.3 790.5 V782.7 M1539.4 790.5 v-2.6 M1531.8 790.5 v-2.6 M1534.6 785.3 h1.3 " fill="none" stroke="#2c2c2c" stroke-width="0.95"/></svg>
<div class="a t" style="left:18px;top:984.53px;font-size:16.5px;line-height:16.5px;color:#333333;transform:scaleX(0.9065);">Page 2 of 9</div>
<div class="a t" style="left:132px;top:984.53px;font-size:16.5px;line-height:16.5px;color:#333333;transform:scaleX(0.9524);">188 words</div>
<svg class="a" style="left:233px;top:982px;" width="22" height="21" viewBox="0 0 22 21"><path d="M1 1.5 Q5.5 0.5 10.5 3 V19 Q5.5 16.5 1 17.5 Z M20 1.5 Q15.5 0.5 10.5 3" fill="none" stroke="#3a3a3a" stroke-width="1.5" stroke-linejoin="round"/><path d="M20 1.5 V10" stroke="#3a3a3a" stroke-width="1.5"/><path d="M12 15 L15 18.5 L21 11" fill="none" stroke="#3a3a3a" stroke-width="1.6"/></svg>
<div class="a t" style="left:281px;top:984.53px;font-size:16.5px;line-height:16.5px;color:#333333;transform:scaleX(0.9156);">English (United States)</div>
<div class="a t" style="left:462px;top:984.53px;font-size:16.5px;line-height:16.5px;color:#333333;transform:scaleX(0.9144);">Text Predictions: On</div>
<div class="a t" style="left:625px;top:984.53px;font-size:16.5px;line-height:16.5px;color:#333333;transform:scaleX(0.9452);">Insert</div>
<svg class="a" style="left:1390px;top:980px;" width="24" height="24" viewBox="0 0 24 24"><path d="M1 6 V1 H6 M18 1 H23 V6 M23 18 V23 H18 M6 23 H1 V18" fill="none" stroke="#3a3a3a" stroke-width="1.6"/><path d="M7 4.5 H13.5 L17.5 8.5 V19.5 H7 Z M13.5 4.5 V8.5 H17.5" fill="none" stroke="#3a3a3a" stroke-width="1.5" stroke-linejoin="round"/></svg>
<div class="a t" style="left:1418px;top:984.53px;font-size:16.5px;line-height:16.5px;color:#333333;transform:scaleX(0.8458);">Focus</div>
<svg class="a" style="left:1492px;top:981px;" width="23" height="20" viewBox="0 0 23 20"><path d="M1 2 H9 Q11.5 2 11.5 4.5 V19 Q11 17 9 17 H1 Z M22 2 H14 Q11.5 2 11.5 4.5 V19 Q12 17 14 17 H22 Z" fill="none" stroke="#3a3a3a" stroke-width="1.5" stroke-linejoin="round"/><path d="M3.5 6 H9 M3.5 9.5 H9 M3.5 13 H9 M14 6 H19.5 M14 9.5 H19.5 M14 13 H19.5" stroke="#3a3a3a" stroke-width="1.2"/></svg>
<div class="a" style="left:1534px;top:976px;width:60px;height:32px;background:#e3e3e3"></div>
<svg class="a" style="left:1554px;top:981px;" width="19" height="22" viewBox="0 0 19 22"><rect x="1" y="1" width="17" height="20" fill="none" stroke="#3a3a3a" stroke-width="1.6"/><path d="M4.5 5 H14.5 M4.5 8.5 H14.5 M4.5 12 H14.5 M4.5 15.5 H14.5" stroke="#3a3a3a" stroke-width="1.3"/></svg>
<svg class="a" style="left:1612px;top:981px;" width="24" height="22" viewBox="0 0 24 22"><path d="M11 20.5 H1 V1 H19 V9" fill="none" stroke="#3a3a3a" stroke-width="1.5"/><path d="M4 5 H16 M4 8.5 H12 M4 12 H9" stroke="#3a3a3a" stroke-width="1.2"/><circle cx="17" cy="15.5" r="6" fill="#f3f3f3" stroke="#3a3a3a" stroke-width="1.3"/><path d="M11 15.5 H23 M17 9.5 Q13.5 15.5 17 21.5 Q20.5 15.5 17 9.5" fill="none" stroke="#3a3a3a" stroke-width="1.1"/></svg>
<div class="a" style="left:1662px;top:991px;width:12px;height:1.5px;background:#444"></div>
<div class="a" style="left:1682px;top:991px;width:148px;height:1.5px;background:#5a5a5a"></div>
<div class="a" style="left:1705px;top:983px;width:8px;height:17px;background:#5e5e5e;border-radius:1px"></div>
<div class="a" style="left:1755px;top:985px;width:1.5px;height:13px;background:#5a5a5a"></div>
<div class="a t" style="left:1876px;top:984.53px;font-size:16.5px;line-height:16.5px;color:#333333;transform:scaleX(0.9225);">0%</div>
<div class="a" style="left:0;top:1010px;width:1920px;height:70px;background:linear-gradient(90deg,#1d202b 0%,#1c2034 20%,#1b2358 30%,#1a2468 40%,#1a2568 55%,#1b245e 66%,#1c2138 74%,#1c1f2b 82%,#1c1f2a 100%)"></div>
<div class="a" style="left:0px;top:1008px;width:1920px;height:2px;background:#44464f"></div>
<div class="a" style="left:32px;top:1028px;width:30px;height:30px;border-radius:50%;background:radial-gradient(circle at 35% 30%,#f8c22a,#ec8d1c 60%,#e45a16)"></div>
<div class="a" style="left:46.5px;top:1018.5px;width:22px;height:22px;border-radius:50%;background:#f59a93;border:1px solid #6b6f7c"></div>
<div class="a t" style="left:53px;top:1024.30px;font-size:15px;line-height:15px;color:#111;transform:scaleX(1.0790);">4</div>
<div class="a t" style="left:77px;top:1023.26px;font-size:18px;line-height:18px;color:#f2f2f2;transform:scaleX(0.8952);">35°C</div>
<div class="a t" style="left:77px;top:1046.26px;font-size:18px;line-height:18px;color:#dedede;transform:scaleX(0.9601);">Sunny</div>
<svg class="a" style="left:576px;top:1027px;" width="35" height="35" viewBox="0 0 35 35"><rect x="0" y="0" width="16.5" height="16.5" rx="1.5" fill="#7cc6f2"/><rect x="18.5" y="0" width="16.5" height="16.5" rx="1.5" fill="#3cb3f5"/><rect x="0" y="18.5" width="16.5" height="16.5" rx="1.5" fill="#3cb3f5"/><rect x="18.5" y="18.5" width="16.5" height="16.5" rx="1.5" fill="#2fa5ee"/></svg>
<div class="a" style="left:631px;top:1020px;width:328px;height:48px;background:rgba(255,255,255,0.14);border:1px solid rgba(255,255,255,0.10);border-radius:24px"></div>
<svg class="a" style="left:648px;top:1032px;" width="24" height="24" viewBox="0 0 24 24"><circle cx="10" cy="10" r="7.8" fill="none" stroke="#e6e6e6" stroke-width="2.4"/><line x1="15.5" y1="15.5" x2="22" y2="22" stroke="#e6e6e6" stroke-width="2.6" stroke-linecap="round"/></svg>
<div class="a t" style="left:687px;top:1034.22px;font-size:21px;line-height:21px;color:#e0e0e6;transform:scaleX(0.9168);">Search</div>
<svg class="a" style="left:896px;top:1026px;" width="43" height="39" viewBox="0 0 43 39"><path d="M21 22 L21 36 M21 26 L12 22 M21 26 L30 22" stroke="#2fb58f" stroke-width="3"/><path d="M14 31 L21 38 L28 31 Z" fill="#27c2b8"/><circle cx="21" cy="9" r="8" fill="#e6412a"/><circle cx="21" cy="9" r="3" fill="#f7c02b"/><circle cx="8" cy="17" r="7.5" fill="#e2432b"/><circle cx="9" cy="17" r="3" fill="#f7c92b"/><circle cx="34" cy="17" r="7.5" fill="#e2432b"/><circle cx="33" cy="17" r="3" fill="#f7c92b"/><path d="M5 25 L13 26 L10 34 Z" fill="#e23a22"/><path d="M37 25 L29 26 L32 34 Z" fill="#e23a22"/></svg>
<svg class="a" style="left:979px;top:1026px;" width="37" height="35" viewBox="0 0 37 35"><rect x="1" y="12" width="23" height="22" rx="2" fill="#7a7a7a" opacity="0.8"/><rect x="9" y="1" width="27" height="24" rx="2.5" fill="#efefef"/></svg>
<svg class="a" style="left:1044px;top:1025px;" width="38" height="38" viewBox="0 0 38 38"><defs><linearGradient id="eg1" x1="0" y1="0" x2="1" y2="1"><stop offset="0" stop-color="#35c1f1"/><stop offset="0.6" stop-color="#1a79d6"/><stop offset="1" stop-color="#1552b0"/></linearGradient><linearGradient id="eg2" x1="0" y1="0" x2="1" y2="0"><stop offset="0" stop-color="#2fa6e8"/><stop offset="1" stop-color="#55d48a"/></linearGradient></defs><path d="M19 1 Q35 1 37 17 Q37 26 28 27 H17 Q16 33 24 36 Q12 38 5 30 Q0 23 1 16 Q4 3 19 1 Z" fill="url(#eg2)"/><path d="M1 16 Q1 34 19 37 Q27 37 33 32 Q24 35 18 30 Q13 25 16 19 Q19 14 26 15 Q16 8 8 10 Q2 12 1 16 Z" fill="url(#eg1)"/></svg>
<div class="a" style="left:1059px;top:1069px;width:9px;height:4px;background:#9ea3ad;border-radius:2px"></div>
<svg class="a" style="left:1111px;top:1026px;" width="36" height="36" viewBox="0 0 36 36"><path d="M4 34 V16 Q4 2 18 2 Q32 2 32 16 V34 Z" fill="#8d8f95"/><circle cx="18" cy="17" r="12" fill="#f2f2f2"/><path d="M18 17 L11 13 M18 17 L25 10" stroke="#222" stroke-width="2.2" stroke-linecap="round"/><path d="M18 17 V27" stroke="#e22" stroke-width="1.5"/><circle cx="29" cy="4" r="2.5" fill="#555"/></svg>
<svg class="a" style="left:1176px;top:1028px;" width="38" height="33" viewBox="0 0 38 33"><path d="M1 3 Q1 1 3 1 H13 L16 4 H35 Q37 4 37 6 V31 Q37 32 35 32 H3 Q1 32 1 30 Z" fill="#f0a72e"/><path d="M1 8 H37 V31 Q37 32 35 32 H3 Q1 32 1 30 Z" fill="#fcc94c"/><path d="M7 22 Q7 20 9 20 H30 Q32 20 32 22 V32 H7 Z" fill="#1d6fd0"/><rect x="13" y="24" width="13" height="2" fill="#8cc3f5"/></svg>
<div class="a" style="left:1191px;top:1069px;width:9px;height:4px;background:#9ea3ad;border-radius:2px"></div>
<svg class="a" style="left:1243px;top:1026px;" width="37" height="37" viewBox="0 0 37 37"><circle cx="18.5" cy="18.5" r="18" fill="#f4c20d"/><path d="M18.5 18.5 L3 9.5 A18 18 0 0 1 34 9.5 Z" fill="#e33b2e"/><path d="M18.5 18.5 L3 9.5 A18 18 0 0 0 14 36 Z" fill="#2f9e4f"/><circle cx="18.5" cy="18.5" r="8" fill="#fff"/><circle cx="18.5" cy="18.5" r="6.3" fill="#3e7fdc"/></svg>
<div class="a" style="left:1257px;top:1069px;width:9px;height:4px;background:#9ea3ad;border-radius:2px"></div>
<div class="a" style="left:1300px;top:1015px;width:56px;height:58px;background:rgba(255,255,255,0.04);border-radius:6px"></div>
<div class="a" style="left:1297px;top:1014px;width:53px;height:60px;background:rgba(255,255,255,0.06);border-radius:6px"></div>
<svg class="a" style="left:1309px;top:1027px;" width="36" height="34" viewBox="0 0 36 34"><rect x="8" y="1" width="27" height="32" rx="2" fill="#2b7cd3"/><rect x="8" y="9" width="27" height="8" fill="#41a5ee"/><rect x="8" y="1" width="27" height="8" fill="#41a5ee" rx="2"/><rect x="8" y="17" width="27" height="8" fill="#2b7cd3"/><rect x="8" y="25" width="27" height="8" fill="#185abd" rx="2"/><rect x="0" y="8" width="18" height="18" rx="2" fill="#185abd"/><path d="M3 12 L5.5 22 L9 15 L12.5 22 L15 12" fill="none" stroke="#fff" stroke-width="2"/></svg>
<div class="a" style="left:1315px;top:1068px;width:24px;height:5px;background:#4cc2ff;border-radius:3px"></div>
<svg class="a" style="left:1493px;top:1038px;" width="17" height="10" viewBox="0 0 17 10"><path d="M1.5 8.5 L8.5 1.5 L15.5 8.5" fill="none" stroke="#fff" stroke-width="1.8"/></svg>
<svg class="a" style="left:1536px;top:1034px;" width="26" height="24" viewBox="0 0 26 24"><path d="M6 18 Q1 18 1 13.5 Q1 9.5 5.5 9 Q7 3 13 3 Q19 3 20.5 9 Q24 10 24 14" fill="#c9c9c9"/><path d="M6 18 H14" stroke="#c9c9c9" stroke-width="2"/><circle cx="18" cy="16" r="6.5" fill="#e0392d"/><path d="M15.5 13.5 L20.5 18.5 M20.5 13.5 L15.5 18.5" stroke="#fff" stroke-width="1.6"/></svg>
<svg class="a" style="left:1601px;top:1040px;" width="12" height="17" viewBox="0 0 12 17"><path d="M10.5 3 Q8 0.5 5 1.5 Q2 3 3.5 6 Q5 8 8 8 Q3 8 2 11 Q1.5 15 5 15.5 Q8 16 10.5 14" fill="none" stroke="#f2f2f2" stroke-width="1.4"/></svg>
<svg class="a" style="left:1650px;top:1034px;" width="27" height="19" viewBox="0 0 27 19"><path d="M1.5 7 Q13.5 -3 25.5 7" fill="none" stroke="#fff" stroke-width="2"/><path d="M5.5 11 Q13.5 4 21.5 11" fill="none" stroke="#fff" stroke-width="2"/><path d="M9.5 14.5 Q13.5 11 17.5 14.5" fill="none" stroke="#fff" stroke-width="2"/><circle cx="13.5" cy="17" r="1.8" fill="#fff"/></svg>
<svg class="a" style="left:1686px;top:1033px;" width="26" height="21" viewBox="0 0 26 21"><path d="M1.5 7 H6 L12 1.5 V19.5 L6 14 H1.5 Z" fill="none" stroke="#fff" stroke-width="1.7" stroke-linejoin="round"/><path d="M16 6.5 Q18 10.5 16 14.5 M19.5 4 Q23 10.5 19.5 17 M23 1.5 Q28 10.5 23 19.5" fill="none" stroke="#fff" stroke-width="1.7"/></svg>
<svg class="a" style="left:1722px;top:1031px;" width="27" height="23" viewBox="0 0 27 23"><path d="M2 8 H21 Q23 8 23 10 V19 Q23 21 21 21 H4 Q2 21 2 19 Z" fill="none" stroke="#fff" stroke-width="1.8"/><rect x="23.5" y="12" width="2.5" height="5" fill="#fff"/><path d="M7 1 L3 10 H8 L5 18 L12 8 H7.5 L10 1 Z" fill="#fff"/></svg>
<div class="a t" style="left:1790px;top:1022.68px;font-size:17.5px;line-height:17.5px;color:#f2f2f2;transform:scaleX(0.9974);">4:05 PM</div>
<div class="a t" style="left:1772px;top:1046.68px;font-size:17.5px;line-height:17.5px;color:#f2f2f2;transform:scaleX(1.0534);">8/22/2025</div>
<svg class="a" style="left:1867px;top:1032px;" width="23" height="25" viewBox="0 0 23 25"><path d="M3 19 Q5 17 5 12 Q5 5 11 5 Q17 5 17 12 Q17 17 19 19 Z" fill="#fff"/><path d="M8 21 Q11 24 14 21" fill="#fff" stroke="#fff" stroke-width="1.5"/><path d="M8 11 H13 L8 16 H13" fill="none" stroke="#1c1f2a" stroke-width="1.6"/><path d="M15 1.5 H21 L15 8 H21" fill="none" stroke="#fff" stroke-width="1.6"/></svg>
<svg class="a" style="left:1826px;top:978px;" width="60" height="60" viewBox="0 0 60 60"><path d="M29.5 2 A27.5 27.5 0 1 1 29.5 57 H2 V29.5 A27.5 27.5 0 0 1 29.5 2 Z" fill="#11876f" stroke="#fff" stroke-width="2.2"/><path d="M45 18 A16.5 16.5 0 1 0 46.5 31.5 H33" fill="none" stroke="#fff" stroke-width="5"/><g fill="#fff"><circle cx="9" cy="48" r="0.9"/><circle cx="13" cy="48" r="0.9"/><circle cx="9" cy="52" r="0.9"/><circle cx="13" cy="52" r="0.9"/><circle cx="9" cy="44" r="0.9"/><circle cx="13" cy="44" r="0.9"/></g></svg>
<svg class="a" style="left:840px;top:945px;" width="240" height="120" viewBox="0 0 240 120"><g fill="none" stroke="rgba(185,185,190,0.45)" stroke-width="10" stroke-linecap="round"><path d="M44 12 V55"/><path d="M44 58 Q44 74 26 74 Q10 74 10 58 Q10 44 22 40"/><circle cx="81" cy="46" r="15"/><path d="M96 58 H210"/><path d="M123 38 V58"/><path d="M146 38 V58"/><path d="M178 34 V58"/><circle cx="212" cy="52" r="16"/></g><g fill="rgba(185,185,190,0.45)"><circle cx="74" cy="14" r="7"/><circle cx="90" cy="14" r="7"/><circle cx="114" cy="27" r="7"/><circle cx="130" cy="27" r="7"/></g><text x="5" y="104" font-family="Liberation Sans" font-weight="700" font-size="39" fill="rgba(185,185,190,0.45)" textLength="232" lengthAdjust="spacingAndGlyphs">mostaql.com</text></svg>
</body></html>
